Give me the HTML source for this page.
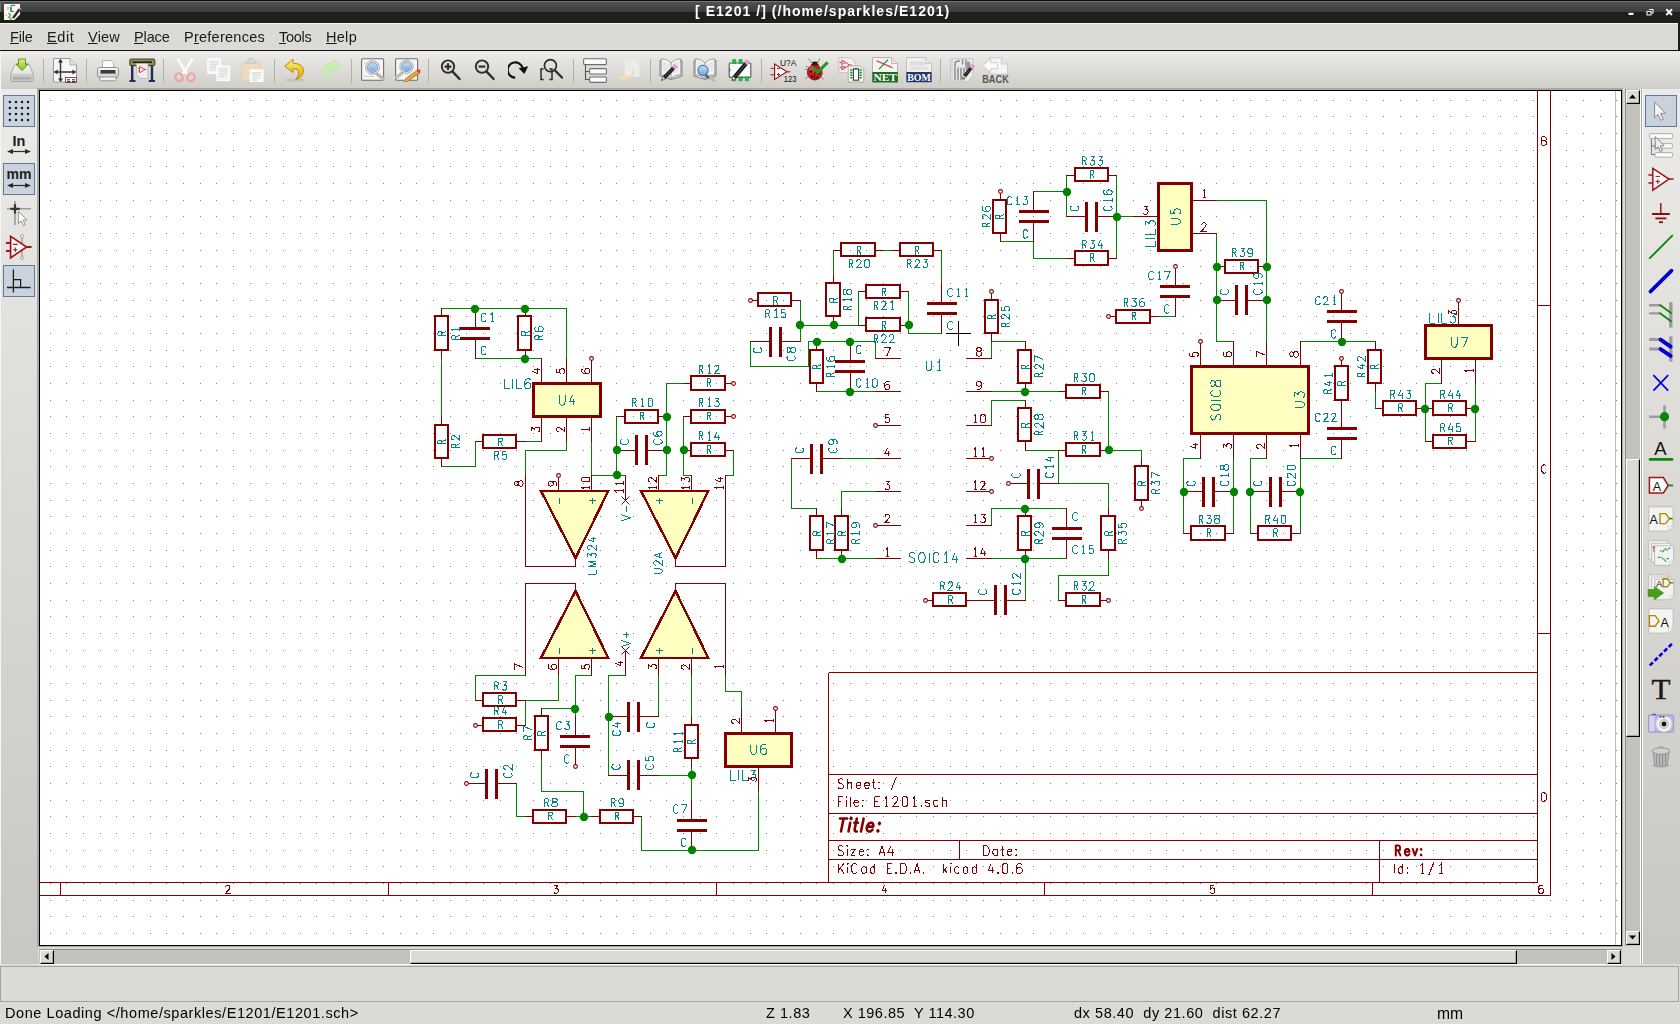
<!DOCTYPE html><html><head><meta charset="utf-8"><title>eeschema</title><style>
*{margin:0;padding:0;box-sizing:border-box}
html,body{width:1680px;height:1024px;overflow:hidden;background:#dcdad5;font-family:"Liberation Sans",sans-serif}
#root{position:relative;width:1680px;height:1024px;overflow:hidden;background:#dcdad5}
.abs{position:absolute}
#title,.mi,.st{will-change:transform}
#titlebar{left:0;top:0;width:1680px;height:23px;background:linear-gradient(#0c0c0c 0,#0c0c0c 1px,#747474 1px,#747474 2px,#525252 2px,#3b3b3b 12px,#1f1f1f 12px,#1e1e1e 23px)}
#title{left:695px;top:2px;white-space:nowrap;color:#fff;font-weight:bold;font-size:14px;line-height:18px;letter-spacing:1.04px}
#menubar{left:0;top:23px;width:1680px;height:27px;background:#dcdad5;border-top:1px solid #f4f3f1}
.mi{position:absolute;top:29px;font-size:14.5px;line-height:17px;color:#1a1a1a}
.mi u{text-decoration:underline;text-underline-offset:1px}
#tbline{left:0;top:50px;width:1680px;height:1px;background:#111}
#toolbar{left:0;top:51px;width:1680px;height:38px;background:linear-gradient(#edecea,#dddbd7 55%,#cfcdc8)}
.sep{position:absolute;top:59px;width:1px;height:24px;background:#b2b0ab}
#lefttb{left:0;top:89px;width:38px;height:875px;background:linear-gradient(#ecebe8,#dcdad6 45%,#c9c7c2)}
#righttb{left:1643px;top:89px;width:37px;height:875px;background:linear-gradient(#ecebe8,#dcdad6 45%,#c9c7c2)}
.sel{position:absolute;background:#c9d3dd;border:1px solid #5c7a99}
</style></head><body><div id="root">
<div id="titlebar" class="abs"></div><div id="title" class="abs">[ E1201 /] (/home/sparkles/E1201)</div>
<svg class="abs" style="left:0;top:0" width="24" height="23" viewBox="0 0 24 23"><rect x="0" y="1" width="1" height="11" fill="#6b6b6b"/><path d="M4 4 H20 V14.5 L14.5 20 H4 Z" fill="#f8f8f8"/><rect x="6.5" y="7" width="2.6" height="2.6" fill="#c8c8c8"/><rect x="10" y="6.6" width="2" height="4.6" fill="#3fae1c"/><path d="M10.6 5.4 H14 M10.4 11.6 H13" stroke="#3a62b8" stroke-width="1"/><circle cx="14.6" cy="5.4" r="0.7" fill="#d33"/><circle cx="13.6" cy="11.6" r="0.7" fill="#d33"/><path d="M8.4 13 L10.6 15 L8.6 17.4 L11.6 18.6 M10.8 19 V20" stroke="#5ab82e" stroke-width="1.4" fill="none"/><circle cx="6.2" cy="15.2" r="0.8" fill="#e88"/><path d="M12 17.4 L18.6 8.4 L20.6 10 L14 18.8 Z" fill="#2a2a2a"/><path d="M18.6 8.4 L19.6 7.4 L21.4 8.8 L20.6 10 Z" fill="#e58ad8"/><path d="M12 17.4 L14 18.8 L11.6 19.2 Z" fill="#e8d870"/></svg>
<svg class="abs" style="left:1620px;top:0" width="60" height="23" viewBox="1620 0 60 23"><rect x="1628.5" y="12.8" width="5" height="2.2" fill="#f4f4f4"/><path d="M1649 9.5 H1653 V13 H1651.5 M1647 11.5 H1651 V15 H1647 Z" fill="none" stroke="#f4f4f4" stroke-width="1.1"/><path d="M1666.3 9.3 L1672 15 M1672 9.3 L1666.3 15" stroke="#f4f4f4" stroke-width="2"/></svg>
<div id="menubar" class="abs"></div><div class="abs" style="left:1678px;top:23px;width:2px;height:28px;background:#1c1c1c"></div>
<div class="mi" style="left:10px;letter-spacing:-0.19px"><u>F</u>ile</div>
<div class="mi" style="left:47px;letter-spacing:0.63px"><u>E</u>dit</div>
<div class="mi" style="left:88px;letter-spacing:0.2px"><u>V</u>iew</div>
<div class="mi" style="left:134px;letter-spacing:-0.14px"><u>P</u>lace</div>
<div class="mi" style="left:184px;letter-spacing:0.25px">P<u>r</u>eferences</div>
<div class="mi" style="left:279px;letter-spacing:-0.29px"><u>T</u>ools</div>
<div class="mi" style="left:326px;letter-spacing:0.29px"><u>H</u>elp</div>
<div id="tbline" class="abs"></div><div id="toolbar" class="abs"></div>
<div class="sep" style="left:43px"></div>
<div class="sep" style="left:86px"></div>
<div class="sep" style="left:163px"></div>
<div class="sep" style="left:274px"></div>
<div class="sep" style="left:351px"></div>
<div class="sep" style="left:428px"></div>
<div class="sep" style="left:573px"></div>
<div class="sep" style="left:650px"></div>
<div class="sep" style="left:761px"></div>
<div class="sep" style="left:940px"></div>
<svg width="0" height="0" style="position:absolute"><defs>
<linearGradient id="gGray" x1="0" y1="0" x2="0" y2="1"><stop offset="0" stop-color="#fafafa"/><stop offset="1" stop-color="#cfcfcf"/></linearGradient>
<linearGradient id="gGrn" x1="0" y1="0" x2="0" y2="1"><stop offset="0" stop-color="#dcee72"/><stop offset="1" stop-color="#86bd2e"/></linearGradient>
<linearGradient id="gYel" x1="0" y1="0" x2="0" y2="1"><stop offset="0" stop-color="#fdf07a"/><stop offset="1" stop-color="#d9a900"/></linearGradient>
<linearGradient id="gLens" x1="0" y1="0" x2="0" y2="1"><stop offset="0" stop-color="#cfe2f7"/><stop offset="1" stop-color="#6f9fd8"/></linearGradient>
<linearGradient id="gBtn" x1="0" y1="0" x2="0" y2="1"><stop offset="0" stop-color="#f3f2f0"/><stop offset="1" stop-color="#d6d4cf"/></linearGradient>
</defs></svg>
<svg class="abs" style="left:10px;top:58px" width="24" height="24" viewBox="0 0 24 24" ><path d="M0.8 16 L4.8 6.6 Q5.4 5.5 6.8 5.5 H17.2 Q18.6 5.5 19.2 6.6 L23.2 16 V22 Q23.2 23.5 21.7 23.5 H2.3 Q0.8 23.5 0.8 22 Z" fill="url(#gGray)" stroke="#9c9c9c" stroke-width="0.9"/><rect x="1.2" y="16" width="21.6" height="7" rx="1" fill="#c9c9c9"/><rect x="3" y="19" width="18" height="2.6" fill="#aeaeae"/><path d="M8.5 1 H15.5 V6.5 H18 L12 12.6 L6 6.5 H8.5 Z" fill="url(#gGrn)" stroke="#5d9c1e" stroke-width="1"/></svg>
<svg class="abs" style="left:53px;top:58px" width="24" height="25" viewBox="0 0 24 25" ><path d="M0.5 0.5 H17 L23.5 7 V24 H0.5 Z" fill="#f7f7f7" stroke="#9a9a9a"/><path d="M17 0.5 V7 H23.5" fill="#e4e4e4" stroke="#9a9a9a" stroke-width="0.8"/><path d="M7.5 2 V23 M1.5 14 H22.5" stroke="#333" stroke-width="1.4" fill="none"/><path d="M7.5 0.8 L5 4.6 H10 Z M7.5 24 L5 20.4 H10 Z M0.8 14 L4.6 11.5 V16.5 Z M23.2 14 L19.4 11.5 V16.5 Z" fill="#333"/><rect x="12.5" y="19.5" width="11" height="5" fill="#fff" stroke="#7a3c3c" stroke-width="0.9"/><path d="M14 21.8 H17 M19 21.8 H22 M14 23.6 H17.5 M19 23.6 H22.5" stroke="#223" stroke-width="1"/></svg>
<svg class="abs" style="left:96px;top:58px" width="24" height="24" viewBox="0 0 24 24" ><path d="M6.5 2.5 H15 L17.8 5.3 V11 H6.5 Z" fill="#fafafa" stroke="#a8a8a8" stroke-width="0.9"/><rect x="1.5" y="9.5" width="21" height="10" rx="2.2" fill="url(#gGray)" stroke="#8f8f8f"/><rect x="4.5" y="12" width="15" height="3.6" fill="#3c3c3c"/><path d="M4 19 H20 V22 Q20 22.8 19 22.8 H5 Q4 22.8 4 22 Z" fill="#f4f4f4" stroke="#8f8f8f" stroke-width="0.9"/><circle cx="20.3" cy="16.8" r="0.7" fill="#7c3"/></svg>
<svg class="abs" style="left:129px;top:58px" width="27" height="25" viewBox="0 0 27 25" ><rect x="0.8" y="1.2" width="25" height="6.4" rx="1.5" fill="#8f8c55" stroke="#4d4b28" stroke-width="1.2"/><rect x="3.5" y="3.4" width="19.5" height="1.6" fill="#26261a"/><path d="M3.2 7.8 V22.5 M23 7.8 V22.5" stroke="#1d2f5c" stroke-width="2.4"/><path d="M0.5 23 H6.5 M19.8 23 H26" stroke="#1d2f5c" stroke-width="1.8"/><path d="M7.5 5.5 H19 V20.5 H11.5 L7.5 16.5 Z" fill="#efefef" stroke="#b0b0b0" stroke-width="0.8"/><path d="M10.5 8.5 L16 11.5 L10.5 14.8 Z M9 10.3 H10.5 M9 13 H10.5 M16 11.5 H17.5" fill="none" stroke="#cf4a4a" stroke-width="1"/></svg>
<svg class="abs" style="left:173px;top:58px" width="24" height="25" viewBox="0 0 24 25" ><path d="M5 1.5 L13.5 15 M19 1.5 L10.5 15" stroke="#fbfbfb" stroke-width="2.6" stroke-linecap="round"/><ellipse cx="6" cy="19.3" rx="3.6" ry="4" fill="none" stroke="#eea4a4" stroke-width="2.2" transform="rotate(-30 6 19.3)"/><ellipse cx="18" cy="19.3" rx="3.6" ry="4" fill="none" stroke="#eea4a4" stroke-width="2.2" transform="rotate(30 18 19.3)"/></svg>
<svg class="abs" style="left:207px;top:58px" width="24" height="24" viewBox="0 0 24 24" ><rect x="0.8" y="0.8" width="12.5" height="14.5" fill="#f3f3f3" stroke="#fdfdfd" stroke-width="1.2"/><path d="M3 4 H11 M3 6.5 H11 M3 9 H11 M3 11.5 H11" stroke="#dedede" stroke-width="1.6"/><rect x="10" y="8" width="12.5" height="14.5" fill="#f3f3f3" stroke="#fdfdfd" stroke-width="1.2"/><path d="M12 11 H20.5 M12 13.5 H20.5 M12 16 H20.5 M12 18.5 H18" stroke="#dedede" stroke-width="1.6"/></svg>
<svg class="abs" style="left:241px;top:58px" width="24" height="24" viewBox="0 0 24 24" ><rect x="0.8" y="3.8" width="18.5" height="19" rx="1.5" fill="#eddcc0" stroke="#e3cfae" stroke-width="1"/><path d="M5.5 5.5 V3.2 H7.5 V1.2 Q7.5 0.5 8.2 0.5 H12 Q12.7 0.5 12.7 1.2 V3.2 H14.7 V5.5 Z" fill="#d6d6d2" stroke="#c4c4c0" stroke-width="0.8"/><rect x="9.2" y="12" width="12.8" height="11.5" fill="#fbfbfb" stroke="#fff" stroke-width="1"/><path d="M11 14.8 H20 M11 17.2 H20 M11 19.6 H20 M11 22 H17" stroke="#dcdcdc" stroke-width="1.4"/></svg>
<svg class="abs" style="left:283px;top:58px" width="24" height="24" viewBox="0 0 24 24" ><ellipse cx="12" cy="22" rx="10" ry="1.6" fill="#b9b7b2" opacity="0.6"/><path d="M10 1.2 L1.8 8.2 L10 14.6 V10.8 Q16.2 10.6 15.6 15.2 Q15.2 18.8 12.8 21.4 Q20.4 19.4 20.4 12.4 Q20.2 5.6 10 5.2 Z" fill="url(#gYel)" stroke="#b58900" stroke-width="1"/></svg>
<svg class="abs" style="left:319px;top:58px" width="24" height="24" viewBox="0 0 24 24" ><path d="M14 1.2 L22.2 8.2 L14 14.6 V10.8 Q7.8 10.6 8.4 15.2 Q8.8 18.8 11.2 21.4 Q3.6 19.4 3.6 12.4 Q3.8 5.6 14 5.2 Z" fill="#c9ecb2" stroke="#bfe6a6" stroke-width="1"/></svg>
<svg class="abs" style="left:361px;top:58px" width="25" height="24" viewBox="0 0 25 24" ><rect x="0.6" y="0.8" width="22" height="21.5" rx="1" fill="#f6f6f6" stroke="#6e6e6e" stroke-width="1.1"/><path d="M3 18.5 H13 M3 5 H5 M3 17 H4" stroke="#c8c8c8" stroke-width="0.8"/><path d="M16 16 L22.5 21" stroke="#bdbdbd" stroke-width="3.4" stroke-linecap="round"/><path d="M16 16 L22.5 21" stroke="#8a8a8a" stroke-width="0.8" stroke-dasharray="1 1"/><circle cx="11.5" cy="9.5" r="5.6" fill="url(#gLens)" stroke="#e8e8e8" stroke-width="2.6"/><circle cx="11.5" cy="9.5" r="6.9" fill="none" stroke="#8d8d8d" stroke-width="0.7"/><circle cx="11.5" cy="9.5" r="5" fill="none" stroke="#4f7fbf" stroke-width="0.8"/></svg>
<svg class="abs" style="left:395px;top:58px" width="26" height="25" viewBox="0 0 26 25" ><rect x="0.6" y="0.8" width="22" height="21.5" rx="1" fill="#f6f6f6" stroke="#6e6e6e" stroke-width="1.1"/><path d="M7 15 L1.5 19.5" stroke="#bdbdbd" stroke-width="3.2" stroke-linecap="round"/><circle cx="11.5" cy="8.8" r="5.4" fill="url(#gLens)" stroke="#e8e8e8" stroke-width="2.6"/><circle cx="11.5" cy="8.8" r="6.7" fill="none" stroke="#8d8d8d" stroke-width="0.7"/><circle cx="11.5" cy="8.8" r="4.8" fill="none" stroke="#4f7fbf" stroke-width="0.8"/><path d="M9.5 23.6 L11.2 20.2 L21.8 12.4 L24.4 15.4 L13.2 23 Z" fill="#e8a33a" stroke="#a66b12" stroke-width="0.7"/><path d="M21.8 12.4 L23.2 11.4 Q24.6 10.8 25.2 12.2 L25.4 14 L24.4 15.4 Z" fill="#e23b3b"/><path d="M9.5 23.6 L11.2 20.2 L13.2 23 Z" fill="#e9d9a8" stroke="#7a6a3a" stroke-width="0.5"/></svg>
<svg class="abs" style="left:440px;top:58px" width="22" height="24" viewBox="0 0 22 24" ><circle cx="8" cy="8.6" r="6.2" fill="none" stroke="#2e2e2e" stroke-width="1.9"/><path d="M12.6 13.6 L19.6 21" stroke="#2e2e2e" stroke-width="2.4" stroke-linecap="round"/><path d="M4.6 8.6 H11.4 M8 5.2 V12" stroke="#2e2e2e" stroke-width="2.2"/></svg>
<svg class="abs" style="left:474px;top:58px" width="22" height="24" viewBox="0 0 22 24" ><circle cx="8" cy="8.6" r="6.2" fill="none" stroke="#2e2e2e" stroke-width="1.9"/><path d="M12.6 13.6 L19.6 21" stroke="#2e2e2e" stroke-width="2.4" stroke-linecap="round"/><path d="M4.6 8.6 H11.4" stroke="#2e2e2e" stroke-width="2.2"/></svg>
<svg class="abs" style="left:508px;top:58px" width="22" height="24" viewBox="0 0 22 24" ><path d="M7.2 19.6 A7.6 7.6 0 1 1 14.6 10" fill="none" stroke="#111" stroke-width="2.2"/><path d="M10.6 10.2 L20.2 8.2 L16.4 16 Z" fill="#111"/></svg>
<svg class="abs" style="left:540px;top:58px" width="24" height="24" viewBox="0 0 24 24" ><circle cx="10.4" cy="7.6" r="6" fill="none" stroke="#2a2a2a" stroke-width="1.7"/><path d="M15 12.4 L22 19.6" stroke="#2a2a2a" stroke-width="2.2" stroke-linecap="round"/><path d="M3.6 11 H1 V21.6 H3.6 M9.4 11 H12 V21.6 H9.4" fill="none" stroke="#2a2a2a" stroke-width="1.5"/></svg>
<svg class="abs" style="left:583px;top:58px" width="24" height="25" viewBox="0 0 24 25" ><path d="M2.5 7 V21.5 H6.5 M2.5 13.5 H6.5" fill="none" stroke="#555" stroke-width="1.1"/><rect x="0.6" y="0.8" width="22.8" height="5.8" rx="1" fill="#fafafa" stroke="#6f6f6f" stroke-width="1.1"/><rect x="6.6" y="10.6" width="16.8" height="5.4" rx="1" fill="#fafafa" stroke="#6f6f6f" stroke-width="1.1"/><rect x="6.6" y="19" width="16.8" height="5.4" rx="1" fill="#fafafa" stroke="#6f6f6f" stroke-width="1.1"/></svg>
<svg class="abs" style="left:618px;top:58px" width="24" height="24" viewBox="0 0 24 24" ><path d="M6.5 0.8 H17 L21.5 5.5 V18.6 H6.5 Z" fill="#ececea" stroke="#e4e4e2" stroke-width="0.8"/><path d="M15.5 11.5 Q15 18 7.4 18.6 V16 L1 19.6 L7.4 23.2 V21 Q17 20.6 15.5 11.5 Z" fill="#f6dcb8" stroke="#f1d3a8" stroke-width="0.6"/></svg>
<svg class="abs" style="left:659px;top:57px" width="27" height="26" viewBox="0 0 27 26" ><path d="M1 3.5 L12 7 L23 3.5 V19 L12 22.5 L1 19 Z" fill="#dcdcdc" stroke="#777" stroke-width="0.9"/><path d="M2.2 1.8 Q7.5 1.2 12 6 Q16.5 1.2 21.8 1.8 V17.8 Q16.5 17.2 12 21.4 Q7.5 17.2 2.2 17.8 Z" fill="#f4f4f4" stroke="#8a8a8a" stroke-width="0.8"/><path d="M12 6 V21.4" stroke="#8a8a8a" stroke-width="0.8"/><path d="M4 5 L10 8 M4 7.5 L10 10.5 M4 10 L10 13 M4 12.5 L10 15.5 M20 5 L14 8 M20 7.5 L14 10.5 M20 10 L14 13 M20 12.5 L14 15.5" stroke="#c4c4c4" stroke-width="0.7"/><path d="M2.5 23.5 L6.6 21.9 L3.9 19.3 Z" fill="#efe3a0" stroke="#333" stroke-width="0.5"/><path d="M6.6 21.9 L15.9 12.3 L13.2 9.7 L3.9 19.3 Z" fill="#1c1c1c"/><path d="M15.9 12.3 L18.4 9.8 L15.6 7.2 L13.2 9.7 Z" fill="#e6a0d8" stroke="#b070a8" stroke-width="0.4"/><path d="M6.0 19.9 L14.2 11.4" stroke="#777" stroke-width="0.6"/><path d="M2.5 23.5 L3.9 23.0 L3.0 22.1 Z" fill="#111"/></svg>
<svg class="abs" style="left:693px;top:57px" width="27" height="26" viewBox="0 0 27 26" ><path d="M1 3.5 L12 7 L23 3.5 V19 L12 22.5 L1 19 Z" fill="#dcdcdc" stroke="#777" stroke-width="0.9"/><path d="M2.2 1.8 Q7.5 1.2 12 6 Q16.5 1.2 21.8 1.8 V17.8 Q16.5 17.2 12 21.4 Q7.5 17.2 2.2 17.8 Z" fill="#f4f4f4" stroke="#8a8a8a" stroke-width="0.8"/><path d="M12 6 V21.4" stroke="#8a8a8a" stroke-width="0.8"/><path d="M4 5 L10 8 M4 7.5 L10 10.5 M4 10 L10 13 M4 12.5 L10 15.5 M20 5 L14 8 M20 7.5 L14 10.5 M20 10 L14 13 M20 12.5 L14 15.5" stroke="#c4c4c4" stroke-width="0.7"/><path d="M13 17.5 L21 23.5" stroke="#b9b9b9" stroke-width="3.2" stroke-linecap="round"/><path d="M12.5 18 L16 21" stroke="#555" stroke-width="2"/><circle cx="10" cy="13.4" r="5" fill="url(#gLens)" stroke="#4679c0" stroke-width="1.2"/></svg>
<svg class="abs" style="left:728px;top:58px" width="25" height="24" viewBox="0 0 25 24" ><rect x="1.2" y="5" width="21.6" height="14.4" rx="1" fill="#fbfbfb" stroke="#555" stroke-width="1.1"/><path d="M1.2 10.4 Q3.4 12.2 1.2 14" fill="none" stroke="#555" stroke-width="0.9"/><path d="M4.6 1.6 H7.8 V5.6 H4.6 Z M11 1.6 H14.2 V5.6 H11 Z M4.6 18.8 H7.8 V22.8 H4.6 Z M11 18.8 H14.2 V22.8 H11 Z M17.4 18.8 H20.6 V22.8 H17.4 Z" fill="#18c43a" stroke="#0d8a25" stroke-width="0.5"/><path d="M3.8 22.4 L8.0 20.7 L4.8 18.0 Z" fill="#efe3a0" stroke="#333" stroke-width="0.5"/><path d="M8.0 20.7 L19.5 7.0 L16.3 4.3 L4.8 18.0 Z" fill="#1c1c1c"/><path d="M19.5 7.0 L21.8 4.4 L18.6 1.6 L16.3 4.3 Z" fill="#e6a0d8" stroke="#b070a8" stroke-width="0.4"/><path d="M7.0 18.6 L17.6 6.1" stroke="#777" stroke-width="0.6"/><path d="M3.8 22.4 L5.2 21.9 L4.1 21.0 Z" fill="#111"/></svg>
<svg class="abs" style="left:770px;top:58px" width="27" height="24" viewBox="0 0 27 24" ><path d="M4.6 6 V21.4 L17 13.8 Z" fill="#fdfdfd" stroke="#a01818" stroke-width="1.2"/><path d="M0.6 10.4 H4.6 M0.6 16.8 H4.6 M17 13.8 H20.4 M7 10.6 H10 M7 16.6 H10 M8.5 15.1 V18.1" stroke="#a01818" stroke-width="1"/><text x="10" y="8.2" font-family="Liberation Sans" font-size="8.6" fill="#111" textLength="16.4" lengthAdjust="spacingAndGlyphs">U?A</text><text x="13.8" y="23.6" font-family="Liberation Sans" font-size="8.6" fill="#111" textLength="12.6" lengthAdjust="spacingAndGlyphs">123</text></svg>
<svg class="abs" style="left:804px;top:57px" width="26" height="25" viewBox="0 0 26 25" ><path d="M4.5 1.5 L9 8 M16 1.5 L12 8 M1 12 L6 13.5 M1.5 22 L6 18 M19.5 22.5 L16 18.5 M2 9.5 L6 11" stroke="#777" stroke-width="0.9" fill="none"/><ellipse cx="10.8" cy="7.4" rx="3.8" ry="2.8" fill="#1a1a1a"/><circle cx="7.6" cy="6.4" r="0.9" fill="#e8c84a"/><circle cx="14" cy="6.4" r="0.9" fill="#e8c84a"/><ellipse cx="10.8" cy="15.4" rx="7.4" ry="7.6" fill="#d41818" stroke="#7c0c0c" stroke-width="0.8"/><ellipse cx="8.4" cy="12.6" rx="3.2" ry="3.4" fill="#ee5a4a" opacity="0.7"/><path d="M10.8 8 V23" stroke="#5a0a0a" stroke-width="0.8"/><circle cx="7" cy="14.6" r="1.4" fill="#1a1a1a"/><circle cx="14.6" cy="16.2" r="1.4" fill="#1a1a1a"/><circle cx="8.2" cy="19.6" r="1.3" fill="#1a1a1a"/><circle cx="13.4" cy="20.6" r="1.1" fill="#1a1a1a"/><path d="M9.4 10.4 L13.6 15.2 L23.6 5.4" fill="none" stroke="#1c9a2e" stroke-width="3"/></svg>
<svg class="abs" style="left:838px;top:57px" width="27" height="26" viewBox="0 0 27 26" ><path d="M0.8 0.8 H13 L17 4.4 V15.6 H0.8 Z" fill="#f1f1f1" stroke="#bdbdbd" stroke-width="0.9"/><path d="M4 3 V13 L11.4 8 Z M1.6 5.6 H4 M1.6 10.4 H4 M11.4 8 H14 M5.4 6.4 H7 M5.4 9.8 H7 M6.2 9 V10.6" fill="none" stroke="#cf3a3a" stroke-width="1"/><path d="M10.2 9 H22.4 L25.8 12 V25 H10.2 Z" fill="#f4f4f4" stroke="#a8a8a8" stroke-width="0.9"/><rect x="15.4" y="11.8" width="5.2" height="11.4" fill="#fdfdfd" stroke="#3a3a3a" stroke-width="1.1"/><path d="M17 11.8 Q18 13.4 19 11.8" fill="none" stroke="#3a3a3a" stroke-width="0.8"/><path d="M12.2 13 H14.4 M12.2 15.6 H14.4 M12.2 18.2 H14.4 M12.2 20.8 H14.4 M21.6 13 H23.8 M21.6 15.6 H23.8 M21.6 18.2 H23.8 M21.6 20.8 H23.8" stroke="#0c9a20" stroke-width="1.6"/></svg>
<svg class="abs" style="left:871.5px;top:57px" width="27" height="26" viewBox="0 0 27 26" ><path d="M0.5 0.5 H19.5 L25.5 6.5 V25 H0.5 Z" fill="#f4f4f4" stroke="#b4b4b4"/><path d="M19.5 0.5 V6.5 H25.5" fill="#e4e4e4" stroke="#b4b4b4" stroke-width="0.8"/><path d="M4.5 3.8 L20.5 10.8" stroke="#d23030" stroke-width="1.2"/><path d="M7 12.2 L16 2.6" stroke="#1c8a2c" stroke-width="1.2"/><rect x="0.4" y="15" width="25.4" height="10.4" fill="#1a6b1a"/><text x="1.4" y="24" font-family="Liberation Serif" font-weight="bold" font-size="10.4" fill="#fff" textLength="23.6" lengthAdjust="spacingAndGlyphs">NET</text></svg>
<svg class="abs" style="left:906px;top:57px" width="26" height="26" viewBox="0 0 26 26" ><path d="M0.5 0.5 H19.5 L25.5 6.5 V25 H0.5 Z" fill="#f0f0f0" stroke="#c2c2c2"/><path d="M19.5 0.5 V6.5 H25.5" fill="#e4e4e4" stroke="#c2c2c2" stroke-width="0.8"/><rect x="3.6" y="4.6" width="16" height="3.6" fill="#dddddb"/><rect x="3.6" y="9.4" width="19" height="3.6" fill="#e2e2e0"/><rect x="0.4" y="15" width="25.2" height="10.2" fill="#1f3670"/><text x="1.2" y="23.6" font-family="Liberation Serif" font-weight="bold" font-size="9.8" fill="#fff" textLength="23.6" lengthAdjust="spacingAndGlyphs">BOM</text></svg>
<svg class="abs" style="left:950px;top:58px" width="25" height="25" viewBox="0 0 25 25" ><path d="M0.8 0.8 H23 V18 L17 24 H0.8 Z" fill="#ebebeb" stroke="#bcbcbc" stroke-width="0.9"/><path d="M2.4 2 V23" stroke="#bbb" stroke-width="1" stroke-dasharray="1 1"/><path d="M5 22.6 V6.4 Q5 3 8.6 3 H10 M8 22.6 V8.8 M11 22.6 V9.4 M12.6 1.6 V6.6 M14 22.6 V9.4 M16 1.6 V8" fill="none" stroke="#8b8b8b" stroke-width="1.5"/><rect x="15.6" y="3.6" width="4.6" height="9" fill="#9a9a9a"/><path d="M5 9.6 H15" stroke="#d8d8d8" stroke-width="1"/><path d="M12.4 21.0 L16.2 18.9 L13.5 16.8 Z" fill="#efe3a0" stroke="#333" stroke-width="0.5"/><path d="M16.2 18.9 L22.4 11.0 L19.7 8.9 L13.5 16.8 Z" fill="#1c1c1c"/><path d="M22.4 11.0 L24.5 8.2 L21.9 6.2 L19.7 8.9 Z" fill="#e6a0d8" stroke="#b070a8" stroke-width="0.4"/><path d="M15.5 17.1 L20.7 10.4" stroke="#777" stroke-width="0.6"/><path d="M12.4 21.0 L13.6 20.3 L12.8 19.6 Z" fill="#111"/></svg>
<svg class="abs" style="left:982px;top:57px" width="28" height="27" viewBox="0 0 28 27" ><path d="M7.6 0.8 H19.4 L25.6 7 V17 H7.6 Z" fill="#f4f4f4" stroke="#c4c4c4" stroke-width="0.9"/><path d="M19.4 0.8 V7 H25.6" fill="#e6e6e6" stroke="#c4c4c4" stroke-width="0.8"/><path d="M0.8 8.6 L8.6 2 V5.8 H15.4 V11.6 H8.6 V15.4 Z" fill="#fdfdfd" stroke="#c9c9c9" stroke-width="0.9"/><text x="0.2" y="25.6" font-family="Liberation Sans" font-weight="bold" font-size="10.4" fill="#555" textLength="26.6" lengthAdjust="spacingAndGlyphs">BACK</text></svg>
<div id="lefttb" class="abs"></div><div id="righttb" class="abs"></div><div class="abs" style="left:0;top:51px;width:1px;height:914px;background:#f6f5f3"></div>
<div class="abs" style="left:37px;top:88px;width:1586px;height:859px;background:#a9a7a2"></div>
<div class="abs" style="left:39px;top:90px;width:1583px;height:856px;background:#000"></div>
<svg width="1581" height="854" viewBox="40 91 1581 854" style="position:absolute;left:40px;top:91px" shape-rendering="crispEdges">
<defs><pattern id="gd" x="50" y="100" width="50" height="50" patternUnits="userSpaceOnUse">
<rect x="0" y="0" width="1" height="1" fill="#848484"/>
<rect x="0" y="16" width="1" height="1" fill="#848484"/>
<rect x="0" y="33" width="1" height="1" fill="#848484"/>
<rect x="16" y="0" width="1" height="1" fill="#848484"/>
<rect x="16" y="16" width="1" height="1" fill="#848484"/>
<rect x="16" y="33" width="1" height="1" fill="#848484"/>
<rect x="33" y="0" width="1" height="1" fill="#848484"/>
<rect x="33" y="16" width="1" height="1" fill="#848484"/>
<rect x="33" y="33" width="1" height="1" fill="#848484"/>
</pattern></defs>
<rect x="40" y="91" width="1581" height="854" fill="#fff"/>
<rect x="40" y="91" width="1581" height="854" fill="url(#gd)"/>
<rect x="1615" y="91" width="1" height="854" fill="#c0c0c0"/>
<path d="M40.0 882.5 L1537.5 882.5 M40.0 895.5 L1550.5 895.5 M1537.5 91.0 L1537.5 882.5 M1550.5 91.0 L1550.5 895.5 M60.5 882.5 L60.5 895.5 M388.5 882.5 L388.5 895.5 M716.5 882.5 L716.5 895.5 M1044.5 882.5 L1044.5 895.5 M1372.5 882.5 L1372.5 895.5 M1537.5 305.5 L1550.5 305.5 M1537.5 633.5 L1550.5 633.5 M828.5 672.5 L1537.5 672.5 M828.5 672.5 L828.5 882.5 M828.5 774.5 L1537.5 774.5 M828.5 813.5 L1537.5 813.5 M828.5 840.5 L1537.5 840.5 M828.5 859.5 L1537.5 859.5 M959.5 840.5 L959.5 859.5 M1379.5 840.5 L1379.5 882.5" stroke="#840000" stroke-width="1" fill="none"/>
<path d="M225.8 887.2 L225.8 886.8 L226.1 886.0 L226.4 885.6 L227.0 885.2 L228.6 885.2 L229.3 885.6 L229.6 886.0 L229.9 886.8 L229.9 887.5 L229.6 888.3 L229.0 889.5 L225.4 893.4 L230.6 893.4 M554.4 885.2 L557.9 885.2 L556.0 888.3 L557.0 888.3 L557.6 888.7 L557.9 889.1 L558.2 890.3 L558.2 891.1 L557.9 892.2 L557.3 893.0 L556.3 893.4 L555.4 893.4 L554.4 893.0 L554.1 892.6 L553.8 891.8 M884.5 885.2 L882.3 890.7 L887.1 890.7 M885.8 887.9 L885.8 893.4 M1214.1 885.2 L1210.9 885.2 L1210.6 888.7 L1210.9 888.3 L1211.9 887.9 L1212.8 887.9 L1213.8 888.3 L1214.4 889.1 L1214.7 890.3 L1214.7 891.1 L1214.4 892.2 L1213.8 893.0 L1212.8 893.4 L1211.9 893.4 L1210.9 893.0 L1210.6 892.6 L1210.3 891.8 M1543.1 886.0 L1542.2 885.2 L1540.6 885.2 L1539.3 886.0 L1538.5 887.5 L1538.5 891.4 L1539.3 893.0 L1540.6 893.4 L1541.8 893.4 L1543.1 892.6 L1543.5 891.4 L1543.5 890.3 L1543.1 889.1 L1541.8 888.3 L1540.6 888.3 L1539.3 889.1 L1538.5 890.3 M1541.6 136.9 L1541.6 145.1 M1541.6 136.9 L1544.8 136.9 L1545.8 137.3 L1546.2 138.1 L1546.2 139.2 L1545.8 140.2 L1544.8 140.8 M1541.6 140.8 L1544.8 140.8 L1545.9 141.2 L1546.6 142.0 L1546.6 143.5 L1546.1 144.5 L1544.8 145.1 L1541.6 145.1 M1546.3 466.5 L1545.6 465.3 L1544.5 464.9 L1543.5 464.9 L1542.4 465.7 L1541.7 466.9 L1541.7 471.1 L1542.4 472.3 L1543.5 473.1 L1544.5 473.1 L1545.6 472.7 L1546.3 471.5 M1541.6 792.9 L1541.6 801.1 M1541.6 792.9 L1544.2 792.9 L1545.4 793.3 L1546.1 794.1 L1546.6 795.2 L1546.7 796.4 L1546.7 797.6 L1546.6 798.8 L1546.1 799.9 L1545.4 800.7 L1544.2 801.1 L1541.6 801.1 M843.4 780.3 L842.6 779.3 L841.5 778.9 L839.9 778.9 L838.8 779.3 L838.0 780.3 L838.0 781.2 L838.4 782.2 L838.8 782.6 L839.5 783.1 L841.8 784.0 L842.6 784.5 L843.0 785.0 L843.4 785.9 L843.4 787.3 L842.6 788.3 L841.5 788.7 L839.9 788.7 L838.8 788.3 L838.0 787.3 M847.7 778.9 L847.7 788.7 M847.7 784.0 L848.9 782.6 L849.6 782.2 L850.8 782.2 L851.6 782.6 L851.9 784.0 L851.9 788.7 M856.2 785.0 L860.8 785.0 L860.8 784.0 L860.4 783.1 L860.0 782.6 L859.3 782.2 L858.1 782.2 L857.3 782.6 L856.6 783.6 L856.2 785.0 L856.2 785.9 L856.6 787.3 L857.3 788.3 L858.1 788.7 L859.3 788.7 L860.0 788.3 L860.8 787.3 M864.6 785.0 L869.2 785.0 L869.2 784.0 L868.8 783.1 L868.5 782.6 L867.7 782.2 L866.5 782.2 L865.8 782.6 L865.0 783.6 L864.6 785.0 L864.6 785.9 L865.0 787.3 L865.8 788.3 L866.5 788.7 L867.7 788.7 L868.5 788.3 L869.2 787.3 M873.6 778.9 L873.6 786.8 L874.0 788.3 L874.7 788.7 L875.5 788.7 M872.4 782.2 L875.1 782.2 M879.1 782.2 L878.7 782.6 L879.1 783.1 L879.5 782.6 L879.1 782.2 M879.1 787.8 L878.7 788.3 L879.1 788.7 L879.5 788.3 L879.1 787.8 M896.3 777.0 L890.9 790.6 M838.3 796.7 L838.3 806.5 M838.3 796.7 L843.3 796.7 M838.3 801.4 L841.4 801.4 M845.9 796.7 L846.3 797.1 L846.7 796.7 L846.3 796.2 L845.9 796.7 M846.3 800.0 L846.3 806.5 M850.1 796.7 L850.1 806.5 M853.8 802.8 L858.5 802.8 L858.5 801.8 L858.1 800.9 L857.7 800.4 L856.9 800.0 L855.8 800.0 L855.0 800.4 L854.2 801.4 L853.8 802.8 L853.8 803.7 L854.2 805.1 L855.0 806.1 L855.8 806.5 L856.9 806.5 L857.7 806.1 L858.5 805.1 M862.7 800.0 L862.3 800.4 L862.7 800.9 L863.1 800.4 L862.7 800.0 M862.7 805.6 L862.3 806.1 L862.7 806.5 L863.1 806.1 L862.7 805.6 M874.9 796.7 L874.9 806.5 M874.9 796.7 L879.9 796.7 M874.9 801.4 L878.0 801.4 M874.9 806.5 L879.9 806.5 M884.6 798.6 L885.4 798.1 L886.5 796.7 L886.5 806.5 M884.6 806.5 L888.4 806.5 M892.8 799.0 L892.8 798.6 L893.2 797.6 L893.6 797.1 L894.4 796.7 L896.3 796.7 L897.0 797.1 L897.4 797.6 L897.8 798.6 L897.8 799.5 L897.4 800.4 L896.7 801.8 L892.4 806.5 L898.6 806.5 M903.7 796.7 L906.0 796.7 L907.2 797.6 L907.6 798.6 L907.6 804.6 L907.2 805.6 L906.0 806.5 L903.7 806.5 L902.6 805.6 L902.2 804.6 L902.2 798.6 L902.6 797.6 L903.7 796.7 M912.7 798.6 L913.5 798.1 L914.6 796.7 L914.6 806.5 M912.7 806.5 L916.6 806.5 M921.3 805.6 L920.9 806.1 L921.3 806.5 L921.7 806.1 L921.3 805.6 M929.7 801.4 L929.3 800.4 L928.2 800.0 L927.0 800.0 L925.9 800.4 L925.5 801.4 L925.9 802.3 L926.6 802.8 L928.6 803.2 L929.3 803.7 L929.7 804.6 L929.7 805.1 L929.3 806.1 L928.2 806.5 L927.0 806.5 L925.9 806.1 L925.5 805.1 M938.1 801.4 L937.3 800.4 L936.6 800.0 L935.4 800.0 L934.7 800.4 L933.9 801.4 L933.5 802.8 L933.5 803.7 L933.9 805.1 L934.7 806.1 L935.4 806.5 L936.6 806.5 L937.3 806.1 L938.1 805.1 M942.4 796.7 L942.4 806.5 M942.4 801.8 L943.5 800.4 L944.3 800.0 L945.4 800.0 L946.2 800.4 L946.6 801.8 L946.6 806.5 M843.4 847.2 L842.6 846.2 L841.5 845.8 L839.9 845.8 L838.8 846.2 L838.0 847.2 L838.0 848.1 L838.4 849.1 L838.8 849.5 L839.5 850.0 L841.8 850.9 L842.6 851.4 L843.0 851.9 L843.4 852.8 L843.4 854.2 L842.6 855.2 L841.5 855.6 L839.9 855.6 L838.8 855.2 L838.0 854.2 M846.9 845.8 L847.2 846.2 L847.6 845.8 L847.2 845.3 L846.9 845.8 M847.2 849.1 L847.2 855.6 M855.2 849.1 L851.0 855.6 M851.0 849.1 L855.2 849.1 M851.0 855.6 L855.2 855.6 M859.0 851.9 L863.6 851.9 L863.6 850.9 L863.2 850.0 L862.8 849.5 L862.1 849.1 L860.9 849.1 L860.2 849.5 L859.4 850.5 L859.0 851.9 L859.0 852.8 L859.4 854.2 L860.2 855.2 L860.9 855.6 L862.1 855.6 L862.8 855.2 L863.6 854.2 M867.9 849.1 L867.5 849.5 L867.9 850.0 L868.2 849.5 L867.9 849.1 M867.9 854.7 L867.5 855.2 L867.9 855.6 L868.2 855.2 L867.9 854.7 M881.9 845.8 L878.8 855.6 M881.9 845.8 L885.0 855.6 M880.0 852.3 L883.8 852.3 M890.8 845.8 L888.1 852.3 L893.9 852.3 M892.4 849.1 L892.4 855.6 M983.0 845.8 L983.0 855.6 M983.0 845.8 L986.1 845.8 L987.6 846.2 L988.4 847.2 L989.0 848.6 L989.2 850.0 L989.2 851.4 L989.0 852.8 L988.4 854.2 L987.6 855.2 L986.1 855.6 L983.0 855.6 M997.4 849.1 L997.4 855.6 M997.4 850.5 L996.6 849.5 L995.9 849.1 L994.7 849.1 L993.9 849.5 L993.2 850.5 L992.8 851.9 L992.8 852.8 L993.2 854.2 L993.9 855.2 L994.7 855.6 L995.9 855.6 L996.6 855.2 L997.4 854.2 M1002.2 845.8 L1002.2 853.7 L1002.6 855.2 L1003.3 855.6 L1004.1 855.6 M1001.0 849.1 L1003.7 849.1 M1007.3 851.9 L1011.9 851.9 L1011.9 850.9 L1011.5 850.0 L1011.1 849.5 L1010.4 849.1 L1009.2 849.1 L1008.4 849.5 L1007.7 850.5 L1007.3 851.9 L1007.3 852.8 L1007.7 854.2 L1008.4 855.2 L1009.2 855.6 L1010.4 855.6 L1011.1 855.2 L1011.9 854.2 M1016.1 849.1 L1015.8 849.5 L1016.1 850.0 L1016.5 849.5 L1016.1 849.1 M1016.1 854.7 L1015.8 855.2 L1016.1 855.6 L1016.5 855.2 L1016.1 854.7 M838.4 863.6 L838.4 873.4 M843.8 863.6 L838.4 870.1 M840.3 867.8 L843.8 873.4 M847.3 863.6 L847.7 864.0 L848.1 863.6 L847.7 863.1 L847.3 863.6 M847.7 866.9 L847.7 873.4 M857.3 865.5 L856.4 864.0 L855.2 863.6 L853.9 863.6 L852.6 864.5 L851.7 865.9 L851.7 871.1 L852.6 872.5 L853.9 873.4 L855.2 873.4 L856.4 873.0 L857.3 871.5 M866.0 866.9 L866.0 873.4 M866.0 868.3 L865.2 867.3 L864.5 866.9 L863.3 866.9 L862.5 867.3 L861.8 868.3 L861.4 869.7 L861.4 870.6 L861.8 872.0 L862.5 873.0 L863.3 873.4 L864.5 873.4 L865.2 873.0 L866.0 872.0 M874.9 863.6 L874.9 873.4 M874.9 868.3 L874.1 867.3 L873.4 866.9 L872.2 866.9 L871.4 867.3 L870.7 868.3 L870.3 869.7 L870.3 870.6 L870.7 872.0 L871.4 873.0 L872.2 873.4 L873.4 873.4 L874.1 873.0 L874.9 872.0 M887.1 863.6 L887.1 873.4 M887.1 863.6 L892.1 863.6 M887.1 868.3 L890.1 868.3 M887.1 873.4 L892.1 873.4 M896.0 872.5 L895.6 873.0 L896.0 873.4 L896.4 873.0 L896.0 872.5 M900.4 863.6 L900.4 873.4 M900.4 863.6 L903.4 863.6 L905.0 864.0 L905.7 865.0 L906.3 866.4 L906.5 867.8 L906.5 869.2 L906.3 870.6 L905.7 872.0 L905.0 873.0 L903.4 873.4 L900.4 873.4 M910.5 872.5 L910.1 873.0 L910.5 873.4 L910.9 873.0 L910.5 872.5 M917.1 863.6 L914.0 873.4 M917.1 863.6 L920.1 873.4 M915.1 870.1 L919.0 870.1 M923.6 872.5 L923.2 873.0 L923.6 873.4 L924.0 873.0 L923.6 872.5 M943.2 863.6 L943.2 873.4 M947.1 866.9 L943.2 871.5 M944.8 869.7 L947.4 873.4 M950.4 863.6 L950.8 864.0 L951.2 863.6 L950.8 863.1 L950.4 863.6 M950.8 866.9 L950.8 873.4 M959.2 868.3 L958.4 867.3 L957.7 866.9 L956.5 866.9 L955.7 867.3 L955.0 868.3 L954.6 869.7 L954.6 870.6 L955.0 872.0 L955.7 873.0 L956.5 873.4 L957.7 873.4 L958.4 873.0 L959.2 872.0 M967.7 866.9 L967.7 873.4 M967.7 868.3 L966.9 867.3 L966.1 866.9 L965.0 866.9 L964.2 867.3 L963.4 868.3 L963.1 869.7 L963.1 870.6 L963.4 872.0 L964.2 873.0 L965.0 873.4 L966.1 873.4 L966.9 873.0 L967.7 872.0 M976.6 863.6 L976.6 873.4 M976.6 868.3 L975.8 867.3 L975.0 866.9 L973.9 866.9 L973.1 867.3 L972.3 868.3 L972.0 869.7 L972.0 870.6 L972.3 872.0 L973.1 873.0 L973.9 873.4 L975.0 873.4 L975.8 873.0 L976.6 872.0 M991.1 863.6 L988.4 870.1 L994.2 870.1 M992.6 866.9 L992.6 873.4 M998.1 872.5 L997.7 873.0 L998.1 873.4 L998.5 873.0 L998.1 872.5 M1004.0 863.6 L1006.3 863.6 L1007.5 864.5 L1007.8 865.5 L1007.8 871.5 L1007.5 872.5 L1006.3 873.4 L1004.0 873.4 L1002.8 872.5 L1002.5 871.5 L1002.5 865.5 L1002.8 864.5 L1004.0 863.6 M1012.2 872.5 L1011.8 873.0 L1012.2 873.4 L1012.6 873.0 L1012.2 872.5 M1021.7 864.5 L1020.7 863.6 L1018.7 863.6 L1017.2 864.5 L1016.2 866.4 L1016.2 871.1 L1017.2 873.0 L1018.7 873.4 L1020.2 873.4 L1021.7 872.5 L1022.2 871.1 L1022.2 869.7 L1021.7 868.3 L1020.2 867.3 L1018.7 867.3 L1017.2 868.3 L1016.2 869.7 M1394.4 863.6 L1394.4 873.4 M1402.8 863.6 L1402.8 873.4 M1402.8 868.3 L1402.0 867.3 L1401.3 866.9 L1400.1 866.9 L1399.4 867.3 L1398.6 868.3 L1398.2 869.7 L1398.2 870.6 L1398.6 872.0 L1399.4 873.0 L1400.1 873.4 L1401.3 873.4 L1402.0 873.0 L1402.8 872.0 M1407.5 866.9 L1407.1 867.3 L1407.5 867.8 L1407.9 867.3 L1407.5 866.9 M1407.5 872.5 L1407.1 873.0 L1407.5 873.4 L1407.9 873.0 L1407.5 872.5 M1420.5 865.5 L1421.3 865.0 L1422.4 863.6 L1422.4 873.4 M1420.5 873.4 L1424.3 873.4 M1434.1 861.7 L1428.7 875.3 M1439.2 865.5 L1440.0 865.0 L1441.1 863.6 L1441.1 873.4 M1439.2 873.4 L1443.1 873.4" stroke="#840000" stroke-width="1" fill="none" stroke-linecap="butt" stroke-linejoin="miter"/>
<path d="M843.6 818.5 L841.0 831.5 M840.0 818.5 L847.2 818.5 M850.6 818.5 L851.0 819.1 L851.6 818.5 L851.2 817.8 L850.6 818.5 M850.2 822.8 L848.5 831.5 M856.8 818.5 L854.7 829.1 L854.8 830.9 L855.7 831.5 L856.8 831.5 M854.4 822.8 L858.0 822.8 M863.6 818.5 L861.0 831.5 M867.0 826.6 L873.1 826.6 L873.4 825.3 L873.1 824.1 L872.7 823.4 L871.8 822.8 L870.3 822.8 L869.1 823.4 L867.9 824.7 L867.0 826.6 L866.7 827.8 L866.9 829.7 L867.7 830.9 L868.6 831.5 L870.1 831.5 L871.2 830.9 L872.5 829.7 M879.5 822.8 L878.9 823.4 L879.3 824.1 L879.9 823.4 L879.5 822.8 M878.0 830.3 L877.4 830.9 L877.8 831.5 L878.4 830.9 L878.0 830.3" stroke="#840000" stroke-width="2.6" fill="none" stroke-linecap="round" stroke-linejoin="round" shape-rendering="auto"/>
<path d="M1395.8 845.6 L1395.8 855.4 M1395.8 845.6 L1398.5 845.6 L1399.6 846.0 L1400.0 847.0 L1400.0 848.9 L1399.6 849.8 L1398.5 850.3 L1395.8 850.3 M1398.1 850.3 L1400.4 855.4 M1404.8 851.7 L1409.4 851.7 L1409.4 850.7 L1409.0 849.8 L1408.6 849.3 L1407.8 848.9 L1406.7 848.9 L1405.9 849.3 L1405.1 850.3 L1404.8 851.7 L1404.8 852.6 L1405.1 854.0 L1405.9 855.0 L1406.7 855.4 L1407.8 855.4 L1408.6 855.0 L1409.4 854.0 M1412.7 848.9 L1415.0 855.4 M1417.3 848.9 L1415.0 855.4 M1421.1 848.9 L1420.7 849.3 L1421.1 849.8 L1421.5 849.3 L1421.1 848.9 M1421.1 854.5 L1420.7 855.0 L1421.1 855.4 L1421.5 855.0 L1421.1 854.5" stroke="#840000" stroke-width="2" fill="none" stroke-linecap="round" stroke-linejoin="round" shape-rendering="auto"/>
<path d="M441.5 308.5 L566.5 308.5 L566.5 358.5 M475.5 358.5 L541.5 358.5 M441.5 358.5 L441.5 416.5 M441.5 466.5 L475.5 466.5 L475.5 441.5 M525.5 441.5 L541.5 441.5 M566.5 441.5 L566.5 450.5 L525.5 450.5 L525.5 475.5 M591.5 441.5 L591.5 475.5 L625.5 475.5 M616.5 416.5 L616.5 475.5 M666.5 416.5 L666.5 383.5 L683.5 383.5 M666.5 416.5 L666.5 475.5 L658.5 475.5 M683.5 416.5 L683.5 475.5 L691.5 475.5 M733.5 450.5 L733.5 475.5 L725.5 475.5 M525.5 675.5 L475.5 675.5 L475.5 700.5 M525.5 700.5 L558.5 700.5 L558.5 675.5 M525.5 700.5 L525.5 725.5 M591.5 675.5 L575.5 675.5 L575.5 716.5 M575.5 708.5 L541.5 708.5 M625.5 675.5 L608.5 675.5 L608.5 775.5 M658.5 675.5 L658.5 716.5 M691.5 675.5 L691.5 716.5 M725.5 675.5 L725.5 691.5 L741.5 691.5 L741.5 708.5 M541.5 758.5 L541.5 791.5 L583.5 791.5 L583.5 816.5 M516.5 783.5 L516.5 816.5 L525.5 816.5 M575.5 816.5 L591.5 816.5 M641.5 816.5 L641.5 850.5 L758.5 850.5 L758.5 791.5 M658.5 775.5 L691.5 775.5 M691.5 766.5 L691.5 800.5 M833.5 250.5 L833.5 275.5 M883.5 250.5 L891.5 250.5 M941.5 250.5 L941.5 283.5 M800.5 300.5 L800.5 341.5 M800.5 325.5 L858.5 325.5 M858.5 291.5 L858.5 325.5 M908.5 291.5 L908.5 333.5 L941.5 333.5 M750.5 341.5 L750.5 366.5 L808.5 366.5 L808.5 341.5 L875.5 341.5 L875.5 358.5 M816.5 391.5 L875.5 391.5 M991.5 358.5 L991.5 341.5 L1025.5 341.5 M991.5 391.5 L1058.5 391.5 M991.5 425.5 L991.5 400.5 L1025.5 400.5 M1025.5 450.5 L1058.5 450.5 M1058.5 450.5 L1058.5 483.5 L1108.5 483.5 L1108.5 508.5 M1108.5 391.5 L1108.5 450.5 M1108.5 450.5 L1141.5 450.5 L1141.5 458.5 M841.5 458.5 L875.5 458.5 M791.5 458.5 L791.5 508.5 L816.5 508.5 M841.5 508.5 L841.5 491.5 L875.5 491.5 M816.5 558.5 L875.5 558.5 M991.5 525.5 L991.5 508.5 L1066.5 508.5 M991.5 558.5 L1066.5 558.5 M1025.5 558.5 L1025.5 600.5 M1108.5 558.5 L1108.5 575.5 L1058.5 575.5 L1058.5 600.5 M1000.5 241.5 L1033.5 241.5 M1033.5 241.5 L1033.5 258.5 L1066.5 258.5 M1033.5 191.5 L1066.5 191.5 M1066.5 175.5 L1066.5 216.5 M1116.5 175.5 L1116.5 258.5 M1116.5 216.5 L1133.5 216.5 M1216.5 200.5 L1266.5 200.5 L1266.5 341.5 M1216.5 233.5 L1216.5 341.5 L1233.5 341.5 M1175.5 316.5 L1158.5 316.5 M1200.5 458.5 L1183.5 458.5 L1183.5 533.5 M1233.5 458.5 L1233.5 533.5 M1266.5 458.5 L1250.5 458.5 L1250.5 533.5 M1300.5 458.5 L1300.5 533.5 M1300.5 458.5 L1341.5 458.5 M1300.5 341.5 L1375.5 341.5 M1375.5 391.5 L1375.5 408.5 M1425.5 408.5 L1425.5 441.5 M1475.5 408.5 L1475.5 441.5 M1425.5 408.5 L1425.5 383.5 L1441.5 383.5 M1475.5 408.5 L1475.5 383.5" stroke="#008400" stroke-width="1" fill="none" stroke-linecap="square"/>
<rect x="435.0" y="316.0" width="13.0" height="34.0" stroke="#840000" stroke-width="2" fill="none"/>
<rect x="518.0" y="316.0" width="13.0" height="34.0" stroke="#840000" stroke-width="2" fill="none"/>
<rect x="435.0" y="425.0" width="13.0" height="33.0" stroke="#840000" stroke-width="2" fill="none"/>
<rect x="483.0" y="435.0" width="33.0" height="13.0" stroke="#840000" stroke-width="2" fill="none"/>
<rect x="625.0" y="410.0" width="33.0" height="13.0" stroke="#840000" stroke-width="2" fill="none"/>
<rect x="691.0" y="376.0" width="34.0" height="14.0" stroke="#840000" stroke-width="2" fill="none"/>
<rect x="691.0" y="410.0" width="34.0" height="13.0" stroke="#840000" stroke-width="2" fill="none"/>
<rect x="691.0" y="443.0" width="34.0" height="13.0" stroke="#840000" stroke-width="2" fill="none"/>
<rect x="533.5" y="383.5" width="67.0" height="33.0" stroke="#840000" stroke-width="3" fill="#ffffc2"/>
<polygon points="541.0,491.0 608.3,491.0 575.5,558.0" stroke="#840000" stroke-width="2.4" fill="#ffffc2" stroke-linejoin="miter"/>
<polygon points="641.0,491.0 708.3,491.0 675.5,558.0" stroke="#840000" stroke-width="2.4" fill="#ffffc2" stroke-linejoin="miter"/>
<polygon points="541.0,658.0 608.3,658.0 575.5,591.0" stroke="#840000" stroke-width="2.4" fill="#ffffc2" stroke-linejoin="miter"/>
<polygon points="641.0,658.0 708.3,658.0 675.5,591.0" stroke="#840000" stroke-width="2.4" fill="#ffffc2" stroke-linejoin="miter"/>
<path d="M621.5 496.5 l8 8 M621.5 504.5 l8 -8" stroke="#840000" stroke-width="1" fill="none" shape-rendering="auto"/>
<path d="M621.5 646.5 l8 8 M621.5 654.5 l8 -8" stroke="#840000" stroke-width="1" fill="none" shape-rendering="auto"/>
<rect x="483.0" y="693.0" width="33.0" height="13.0" stroke="#840000" stroke-width="2" fill="none"/>
<rect x="483.0" y="718.0" width="33.0" height="13.0" stroke="#840000" stroke-width="2" fill="none"/>
<rect x="535.0" y="716.0" width="13.0" height="34.0" stroke="#840000" stroke-width="2" fill="none"/>
<rect x="533.0" y="810.0" width="33.0" height="13.0" stroke="#840000" stroke-width="2" fill="none"/>
<rect x="600.0" y="810.0" width="33.0" height="13.0" stroke="#840000" stroke-width="2" fill="none"/>
<rect x="685.0" y="725.0" width="13.0" height="33.0" stroke="#840000" stroke-width="2" fill="none"/>
<rect x="725.5" y="733.5" width="66.0" height="33.0" stroke="#840000" stroke-width="3" fill="#ffffc2"/>
<rect x="841.0" y="243.0" width="34.0" height="13.0" stroke="#840000" stroke-width="2" fill="none"/>
<rect x="900.0" y="243.0" width="33.0" height="13.0" stroke="#840000" stroke-width="2" fill="none"/>
<rect x="826.0" y="283.0" width="14.0" height="33.0" stroke="#840000" stroke-width="2" fill="none"/>
<rect x="758.0" y="293.0" width="33.0" height="13.0" stroke="#840000" stroke-width="2" fill="none"/>
<rect x="866.0" y="285.0" width="34.0" height="13.0" stroke="#840000" stroke-width="2" fill="none"/>
<rect x="866.0" y="318.0" width="34.0" height="13.0" stroke="#840000" stroke-width="2" fill="none"/>
<rect x="810.0" y="350.0" width="13.0" height="33.0" stroke="#840000" stroke-width="2" fill="none"/>
<rect x="985.0" y="300.0" width="13.0" height="33.0" stroke="#840000" stroke-width="2" fill="none"/>
<rect x="1018.0" y="350.0" width="13.0" height="33.0" stroke="#840000" stroke-width="2" fill="none"/>
<rect x="1018.0" y="408.0" width="13.0" height="33.0" stroke="#840000" stroke-width="2" fill="none"/>
<rect x="1066.0" y="385.0" width="34.0" height="13.0" stroke="#840000" stroke-width="2" fill="none"/>
<rect x="1066.0" y="443.0" width="34.0" height="13.0" stroke="#840000" stroke-width="2" fill="none"/>
<rect x="1135.0" y="466.0" width="13.0" height="34.0" stroke="#840000" stroke-width="2" fill="none"/>
<rect x="1101.0" y="516.0" width="14.0" height="34.0" stroke="#840000" stroke-width="2" fill="none"/>
<rect x="810.0" y="516.0" width="13.0" height="34.0" stroke="#840000" stroke-width="2" fill="none"/>
<rect x="835.0" y="516.0" width="13.0" height="34.0" stroke="#840000" stroke-width="2" fill="none"/>
<rect x="1018.0" y="516.0" width="13.0" height="34.0" stroke="#840000" stroke-width="2" fill="none"/>
<rect x="933.0" y="593.0" width="33.0" height="13.0" stroke="#840000" stroke-width="2" fill="none"/>
<rect x="1066.0" y="593.0" width="34.0" height="13.0" stroke="#840000" stroke-width="2" fill="none"/>
<rect x="993.0" y="200.0" width="13.0" height="33.0" stroke="#840000" stroke-width="2" fill="none"/>
<rect x="1075.0" y="168.0" width="33.0" height="13.0" stroke="#840000" stroke-width="2" fill="none"/>
<rect x="1075.0" y="251.0" width="33.0" height="14.0" stroke="#840000" stroke-width="2" fill="none"/>
<rect x="1225.0" y="260.0" width="33.0" height="13.0" stroke="#840000" stroke-width="2" fill="none"/>
<rect x="1116.0" y="310.0" width="34.0" height="13.0" stroke="#840000" stroke-width="2" fill="none"/>
<rect x="1158.5" y="183.5" width="33.0" height="67.0" stroke="#840000" stroke-width="3" fill="#ffffc2"/>
<rect x="1191.5" y="366.5" width="117.0" height="67.0" stroke="#840000" stroke-width="3" fill="#ffffc2"/>
<rect x="1191.0" y="526.0" width="34.0" height="14.0" stroke="#840000" stroke-width="2" fill="none"/>
<rect x="1258.0" y="526.0" width="33.0" height="14.0" stroke="#840000" stroke-width="2" fill="none"/>
<rect x="1335.0" y="366.0" width="13.0" height="34.0" stroke="#840000" stroke-width="2" fill="none"/>
<rect x="1368.0" y="350.0" width="13.0" height="33.0" stroke="#840000" stroke-width="2" fill="none"/>
<rect x="1383.0" y="401.0" width="33.0" height="14.0" stroke="#840000" stroke-width="2" fill="none"/>
<rect x="1433.0" y="401.0" width="33.0" height="14.0" stroke="#840000" stroke-width="2" fill="none"/>
<rect x="1433.0" y="435.0" width="33.0" height="13.0" stroke="#840000" stroke-width="2" fill="none"/>
<rect x="1425.5" y="325.5" width="66.0" height="33.0" stroke="#840000" stroke-width="3" fill="#ffffc2"/>
<rect x="460.0" y="327.0" width="30" height="3" fill="#840000"/>
<rect x="460.0" y="337.0" width="30" height="3" fill="#840000"/>
<rect x="635.0" y="435.0" width="3" height="30" fill="#840000"/>
<rect x="645.0" y="435.0" width="3" height="30" fill="#840000"/>
<rect x="560.0" y="735.0" width="30" height="3" fill="#840000"/>
<rect x="560.0" y="745.0" width="30" height="3" fill="#840000"/>
<rect x="627.0" y="702.0" width="3" height="30" fill="#840000"/>
<rect x="637.0" y="702.0" width="3" height="30" fill="#840000"/>
<rect x="485.0" y="769.0" width="3" height="30" fill="#840000"/>
<rect x="495.0" y="769.0" width="3" height="30" fill="#840000"/>
<rect x="627.0" y="760.0" width="3" height="30" fill="#840000"/>
<rect x="637.0" y="760.0" width="3" height="30" fill="#840000"/>
<rect x="677.0" y="819.0" width="30" height="3" fill="#840000"/>
<rect x="677.0" y="829.0" width="30" height="3" fill="#840000"/>
<rect x="927.0" y="302.0" width="30" height="3" fill="#840000"/>
<rect x="927.0" y="312.0" width="30" height="3" fill="#840000"/>
<rect x="769.0" y="327.0" width="3" height="30" fill="#840000"/>
<rect x="779.0" y="327.0" width="3" height="30" fill="#840000"/>
<rect x="835.0" y="360.0" width="30" height="3" fill="#840000"/>
<rect x="835.0" y="370.0" width="30" height="3" fill="#840000"/>
<rect x="810.0" y="444.0" width="3" height="30" fill="#840000"/>
<rect x="820.0" y="444.0" width="3" height="30" fill="#840000"/>
<rect x="1027.0" y="469.0" width="3" height="30" fill="#840000"/>
<rect x="1037.0" y="469.0" width="3" height="30" fill="#840000"/>
<rect x="1052.0" y="527.0" width="30" height="3" fill="#840000"/>
<rect x="1052.0" y="537.0" width="30" height="3" fill="#840000"/>
<rect x="994.0" y="585.0" width="3" height="30" fill="#840000"/>
<rect x="1004.0" y="585.0" width="3" height="30" fill="#840000"/>
<rect x="1019.0" y="210.0" width="30" height="3" fill="#840000"/>
<rect x="1019.0" y="220.0" width="30" height="3" fill="#840000"/>
<rect x="1085.0" y="202.0" width="3" height="30" fill="#840000"/>
<rect x="1095.0" y="202.0" width="3" height="30" fill="#840000"/>
<rect x="1235.0" y="285.0" width="3" height="30" fill="#840000"/>
<rect x="1245.0" y="285.0" width="3" height="30" fill="#840000"/>
<rect x="1160.0" y="285.0" width="30" height="3" fill="#840000"/>
<rect x="1160.0" y="295.0" width="30" height="3" fill="#840000"/>
<rect x="1202.0" y="477.0" width="3" height="30" fill="#840000"/>
<rect x="1212.0" y="477.0" width="3" height="30" fill="#840000"/>
<rect x="1269.0" y="477.0" width="3" height="30" fill="#840000"/>
<rect x="1279.0" y="477.0" width="3" height="30" fill="#840000"/>
<rect x="1327.0" y="427.0" width="30" height="3" fill="#840000"/>
<rect x="1327.0" y="437.0" width="30" height="3" fill="#840000"/>
<rect x="1327.0" y="310.0" width="30" height="3" fill="#840000"/>
<rect x="1327.0" y="320.0" width="30" height="3" fill="#840000"/>
<path d="M441.5 308.5 L441.5 316.5 M441.5 350.5 L441.5 358.5 M525.5 308.5 L525.5 316.5 M525.5 350.5 L525.5 358.5 M441.5 416.5 L441.5 425.5 M441.5 458.5 L441.5 466.5 M475.5 441.5 L483.5 441.5 M516.5 441.5 L525.5 441.5 M616.5 416.5 L625.5 416.5 M658.5 416.5 L666.5 416.5 M683.5 383.5 L691.5 383.5 M725.5 383.5 L733.5 383.5 M683.5 416.5 L691.5 416.5 M725.5 416.5 L733.5 416.5 M683.5 450.5 L691.5 450.5 M725.5 450.5 L733.5 450.5 M475.5 308.5 L475.5 327.5 M475.5 339.5 L475.5 358.5 M616.5 450.5 L636.5 450.5 M647.5 450.5 L666.5 450.5 M541.5 358.5 L541.5 383.5 M566.5 358.5 L566.5 383.5 M591.5 358.5 L591.5 383.5 M541.5 441.5 L541.5 416.5 M566.5 441.5 L566.5 416.5 M591.5 441.5 L591.5 416.5 M525.5 475.5 L525.5 566.5 L575.5 566.5 L575.5 558.5 M558.5 475.5 L558.5 491.5 M591.5 475.5 L591.5 491.5 M725.5 475.5 L725.5 566.5 L675.5 566.5 L675.5 558.5 M658.5 475.5 L658.5 491.5 M691.5 475.5 L691.5 491.5 M575.5 591.5 L575.5 583.5 L525.5 583.5 L525.5 675.5 M558.5 675.5 L558.5 658.5 M591.5 675.5 L591.5 658.5 M675.5 591.5 L675.5 583.5 L725.5 583.5 L725.5 675.5 M658.5 675.5 L658.5 658.5 M691.5 675.5 L691.5 658.5 M625.5 475.5 L625.5 500.5 M625.5 650.5 L625.5 675.5 M475.5 700.5 L483.5 700.5 M516.5 700.5 L525.5 700.5 M475.5 725.5 L483.5 725.5 M516.5 725.5 L525.5 725.5 M541.5 708.5 L541.5 716.5 M541.5 750.5 L541.5 758.5 M525.5 816.5 L533.5 816.5 M566.5 816.5 L575.5 816.5 M591.5 816.5 L600.5 816.5 M633.5 816.5 L641.5 816.5 M691.5 716.5 L691.5 725.5 M691.5 758.5 L691.5 766.5 M575.5 716.5 L575.5 736.5 M575.5 747.5 L575.5 766.5 M608.5 716.5 L627.5 716.5 M639.5 716.5 L658.5 716.5 M466.5 783.5 L486.5 783.5 M497.5 783.5 L516.5 783.5 M608.5 775.5 L627.5 775.5 M639.5 775.5 L658.5 775.5 M691.5 800.5 L691.5 819.5 M691.5 831.5 L691.5 850.5 M741.5 708.5 L741.5 733.5 M775.5 708.5 L775.5 733.5 M758.5 791.5 L758.5 766.5 M833.5 250.5 L841.5 250.5 M875.5 250.5 L883.5 250.5 M891.5 250.5 L900.5 250.5 M933.5 250.5 L941.5 250.5 M833.5 275.5 L833.5 283.5 M833.5 316.5 L833.5 325.5 M750.5 300.5 L758.5 300.5 M791.5 300.5 L800.5 300.5 M858.5 291.5 L866.5 291.5 M900.5 291.5 L908.5 291.5 M858.5 325.5 L866.5 325.5 M900.5 325.5 L908.5 325.5 M816.5 341.5 L816.5 350.5 M816.5 383.5 L816.5 391.5 M991.5 291.5 L991.5 300.5 M991.5 333.5 L991.5 341.5 M1025.5 341.5 L1025.5 350.5 M1025.5 383.5 L1025.5 391.5 M1025.5 400.5 L1025.5 408.5 M1025.5 441.5 L1025.5 450.5 M1058.5 391.5 L1066.5 391.5 M1100.5 391.5 L1108.5 391.5 M1058.5 450.5 L1066.5 450.5 M1100.5 450.5 L1108.5 450.5 M1141.5 458.5 L1141.5 466.5 M1141.5 500.5 L1141.5 508.5 M1108.5 508.5 L1108.5 516.5 M1108.5 550.5 L1108.5 558.5 M816.5 508.5 L816.5 516.5 M816.5 550.5 L816.5 558.5 M841.5 508.5 L841.5 516.5 M841.5 550.5 L841.5 558.5 M1025.5 508.5 L1025.5 516.5 M1025.5 550.5 L1025.5 558.5 M925.5 600.5 L933.5 600.5 M966.5 600.5 L975.5 600.5 M1058.5 600.5 L1066.5 600.5 M1100.5 600.5 L1108.5 600.5 M941.5 283.5 L941.5 302.5 M941.5 314.5 L941.5 333.5 M750.5 341.5 L769.5 341.5 M781.5 341.5 L800.5 341.5 M850.5 341.5 L850.5 361.5 M850.5 372.5 L850.5 391.5 M791.5 458.5 L811.5 458.5 M822.5 458.5 L841.5 458.5 M1008.5 483.5 L1027.5 483.5 M1039.5 483.5 L1058.5 483.5 M1066.5 508.5 L1066.5 527.5 M1066.5 539.5 L1066.5 558.5 M975.5 600.5 L994.5 600.5 M1006.5 600.5 L1025.5 600.5 M875.5 358.5 L900.5 358.5 M875.5 391.5 L900.5 391.5 M875.5 425.5 L900.5 425.5 M875.5 458.5 L900.5 458.5 M875.5 491.5 L900.5 491.5 M875.5 525.5 L900.5 525.5 M875.5 558.5 L900.5 558.5 M966.5 358.5 L991.5 358.5 M966.5 391.5 L991.5 391.5 M966.5 425.5 L991.5 425.5 M966.5 458.5 L991.5 458.5 M966.5 491.5 L991.5 491.5 M966.5 525.5 L991.5 525.5 M966.5 558.5 L991.5 558.5 M1000.5 191.5 L1000.5 200.5 M1000.5 233.5 L1000.5 241.5 M1066.5 175.5 L1075.5 175.5 M1108.5 175.5 L1116.5 175.5 M1066.5 258.5 L1075.5 258.5 M1108.5 258.5 L1116.5 258.5 M1216.5 266.5 L1225.5 266.5 M1258.5 266.5 L1266.5 266.5 M1108.5 316.5 L1116.5 316.5 M1150.5 316.5 L1158.5 316.5 M1033.5 191.5 L1033.5 211.5 M1033.5 222.5 L1033.5 241.5 M1066.5 216.5 L1086.5 216.5 M1097.5 216.5 L1116.5 216.5 M1216.5 300.5 L1236.5 300.5 M1247.5 300.5 L1266.5 300.5 M1175.5 266.5 L1175.5 286.5 M1175.5 297.5 L1175.5 316.5 M1133.5 216.5 L1158.5 216.5 M1191.5 200.5 L1216.5 200.5 M1191.5 233.5 L1216.5 233.5 M1200.5 341.5 L1200.5 366.5 M1233.5 341.5 L1233.5 366.5 M1266.5 341.5 L1266.5 366.5 M1300.5 341.5 L1300.5 366.5 M1200.5 458.5 L1200.5 433.5 M1233.5 458.5 L1233.5 433.5 M1266.5 458.5 L1266.5 433.5 M1300.5 458.5 L1300.5 433.5 M1183.5 533.5 L1191.5 533.5 M1225.5 533.5 L1233.5 533.5 M1250.5 533.5 L1258.5 533.5 M1291.5 533.5 L1300.5 533.5 M1341.5 358.5 L1341.5 366.5 M1341.5 400.5 L1341.5 408.5 M1375.5 341.5 L1375.5 350.5 M1375.5 383.5 L1375.5 391.5 M1375.5 408.5 L1383.5 408.5 M1416.5 408.5 L1425.5 408.5 M1425.5 408.5 L1433.5 408.5 M1466.5 408.5 L1475.5 408.5 M1425.5 441.5 L1433.5 441.5 M1466.5 441.5 L1475.5 441.5 M1183.5 491.5 L1202.5 491.5 M1214.5 491.5 L1233.5 491.5 M1250.5 491.5 L1269.5 491.5 M1281.5 491.5 L1300.5 491.5 M1341.5 408.5 L1341.5 427.5 M1341.5 439.5 L1341.5 458.5 M1341.5 291.5 L1341.5 311.5 M1341.5 322.5 L1341.5 341.5 M1458.5 300.5 L1458.5 325.5 M1441.5 383.5 L1441.5 358.5 M1475.5 383.5 L1475.5 358.5" stroke="#840000" stroke-width="1" fill="none" stroke-linecap="square"/>
<circle cx="733.5" cy="383.5" r="1.9" stroke="#840000" stroke-width="1.1" fill="#fff" shape-rendering="auto"/>
<circle cx="733.5" cy="416.5" r="1.9" stroke="#840000" stroke-width="1.1" fill="#fff" shape-rendering="auto"/>
<circle cx="591.5" cy="358.5" r="1.9" stroke="#840000" stroke-width="1.1" fill="#fff" shape-rendering="auto"/>
<circle cx="558.5" cy="475.5" r="1.9" stroke="#840000" stroke-width="1.1" fill="#fff" shape-rendering="auto"/>
<circle cx="475.5" cy="725.5" r="1.9" stroke="#840000" stroke-width="1.1" fill="#fff" shape-rendering="auto"/>
<circle cx="575.5" cy="766.5" r="1.9" stroke="#840000" stroke-width="1.1" fill="#fff" shape-rendering="auto"/>
<circle cx="466.5" cy="783.5" r="1.9" stroke="#840000" stroke-width="1.1" fill="#fff" shape-rendering="auto"/>
<circle cx="775.5" cy="708.5" r="1.9" stroke="#840000" stroke-width="1.1" fill="#fff" shape-rendering="auto"/>
<circle cx="750.5" cy="300.5" r="1.9" stroke="#840000" stroke-width="1.1" fill="#fff" shape-rendering="auto"/>
<circle cx="991.5" cy="291.5" r="1.9" stroke="#840000" stroke-width="1.1" fill="#fff" shape-rendering="auto"/>
<circle cx="1141.5" cy="508.5" r="1.9" stroke="#840000" stroke-width="1.1" fill="#fff" shape-rendering="auto"/>
<circle cx="925.5" cy="600.5" r="1.9" stroke="#840000" stroke-width="1.1" fill="#fff" shape-rendering="auto"/>
<circle cx="1108.5" cy="600.5" r="1.9" stroke="#840000" stroke-width="1.1" fill="#fff" shape-rendering="auto"/>
<circle cx="1008.5" cy="483.5" r="1.9" stroke="#840000" stroke-width="1.1" fill="#fff" shape-rendering="auto"/>
<circle cx="875.5" cy="425.5" r="1.9" stroke="#840000" stroke-width="1.1" fill="#fff" shape-rendering="auto"/>
<circle cx="875.5" cy="525.5" r="1.9" stroke="#840000" stroke-width="1.1" fill="#fff" shape-rendering="auto"/>
<circle cx="991.5" cy="458.5" r="1.9" stroke="#840000" stroke-width="1.1" fill="#fff" shape-rendering="auto"/>
<circle cx="991.5" cy="491.5" r="1.9" stroke="#840000" stroke-width="1.1" fill="#fff" shape-rendering="auto"/>
<circle cx="1000.5" cy="191.5" r="1.9" stroke="#840000" stroke-width="1.1" fill="#fff" shape-rendering="auto"/>
<circle cx="1108.5" cy="316.5" r="1.9" stroke="#840000" stroke-width="1.1" fill="#fff" shape-rendering="auto"/>
<circle cx="1175.5" cy="266.5" r="1.9" stroke="#840000" stroke-width="1.1" fill="#fff" shape-rendering="auto"/>
<circle cx="1200.5" cy="341.5" r="1.9" stroke="#840000" stroke-width="1.1" fill="#fff" shape-rendering="auto"/>
<circle cx="1341.5" cy="358.5" r="1.9" stroke="#840000" stroke-width="1.1" fill="#fff" shape-rendering="auto"/>
<circle cx="1341.5" cy="291.5" r="1.9" stroke="#840000" stroke-width="1.1" fill="#fff" shape-rendering="auto"/>
<circle cx="1458.5" cy="300.5" r="1.9" stroke="#840000" stroke-width="1.1" fill="#fff" shape-rendering="auto"/>
<circle cx="475.0" cy="309.0" r="4.2" fill="#008400" shape-rendering="auto"/>
<circle cx="525.0" cy="309.0" r="4.2" fill="#008400" shape-rendering="auto"/>
<circle cx="525.0" cy="359.0" r="4.2" fill="#008400" shape-rendering="auto"/>
<circle cx="617.0" cy="450.0" r="4.2" fill="#008400" shape-rendering="auto"/>
<circle cx="617.0" cy="475.0" r="4.2" fill="#008400" shape-rendering="auto"/>
<circle cx="667.0" cy="417.0" r="4.2" fill="#008400" shape-rendering="auto"/>
<circle cx="667.0" cy="450.0" r="4.2" fill="#008400" shape-rendering="auto"/>
<circle cx="684.0" cy="450.0" r="4.2" fill="#008400" shape-rendering="auto"/>
<circle cx="575.0" cy="709.0" r="4.2" fill="#008400" shape-rendering="auto"/>
<circle cx="609.0" cy="717.0" r="4.2" fill="#008400" shape-rendering="auto"/>
<circle cx="584.0" cy="817.0" r="4.2" fill="#008400" shape-rendering="auto"/>
<circle cx="692.0" cy="775.0" r="4.2" fill="#008400" shape-rendering="auto"/>
<circle cx="692.0" cy="850.0" r="4.2" fill="#008400" shape-rendering="auto"/>
<circle cx="800.0" cy="325.0" r="4.2" fill="#008400" shape-rendering="auto"/>
<circle cx="834.0" cy="325.0" r="4.2" fill="#008400" shape-rendering="auto"/>
<circle cx="909.0" cy="325.0" r="4.2" fill="#008400" shape-rendering="auto"/>
<circle cx="817.0" cy="342.0" r="4.2" fill="#008400" shape-rendering="auto"/>
<circle cx="850.0" cy="342.0" r="4.2" fill="#008400" shape-rendering="auto"/>
<circle cx="850.0" cy="392.0" r="4.2" fill="#008400" shape-rendering="auto"/>
<circle cx="1025.0" cy="392.0" r="4.2" fill="#008400" shape-rendering="auto"/>
<circle cx="1109.0" cy="450.0" r="4.2" fill="#008400" shape-rendering="auto"/>
<circle cx="842.0" cy="559.0" r="4.2" fill="#008400" shape-rendering="auto"/>
<circle cx="1025.0" cy="509.0" r="4.2" fill="#008400" shape-rendering="auto"/>
<circle cx="1025.0" cy="559.0" r="4.2" fill="#008400" shape-rendering="auto"/>
<circle cx="1067.0" cy="192.0" r="4.2" fill="#008400" shape-rendering="auto"/>
<circle cx="1117.0" cy="217.0" r="4.2" fill="#008400" shape-rendering="auto"/>
<circle cx="1217.0" cy="267.0" r="4.2" fill="#008400" shape-rendering="auto"/>
<circle cx="1217.0" cy="300.0" r="4.2" fill="#008400" shape-rendering="auto"/>
<circle cx="1267.0" cy="267.0" r="4.2" fill="#008400" shape-rendering="auto"/>
<circle cx="1267.0" cy="300.0" r="4.2" fill="#008400" shape-rendering="auto"/>
<circle cx="1184.0" cy="492.0" r="4.2" fill="#008400" shape-rendering="auto"/>
<circle cx="1234.0" cy="492.0" r="4.2" fill="#008400" shape-rendering="auto"/>
<circle cx="1250.0" cy="492.0" r="4.2" fill="#008400" shape-rendering="auto"/>
<circle cx="1300.0" cy="492.0" r="4.2" fill="#008400" shape-rendering="auto"/>
<circle cx="1342.0" cy="342.0" r="4.2" fill="#008400" shape-rendering="auto"/>
<circle cx="1425.0" cy="409.0" r="4.2" fill="#008400" shape-rendering="auto"/>
<circle cx="1475.0" cy="409.0" r="4.2" fill="#008400" shape-rendering="auto"/>
<path d="M559.5 497.5 V503.5 M592.5 497.5 V503.5 M589.0 500.5 H596.0 M659.5 497.5 V503.5 M656.0 500.5 H663.0 M692.5 497.5 V503.5 M559.5 647.5 V653.5 M592.5 647.5 V653.5 M589.0 650.5 H596.0 M659.5 647.5 V653.5 M656.0 650.5 H663.0 M692.5 647.5 V653.5" stroke="#008484" stroke-width="1" fill="none"/>
<path d="M437.9 335.3 L446.2 335.3 M437.9 335.3 L437.9 333.0 L438.3 332.0 L439.1 331.7 L440.6 331.7 L441.4 332.0 L441.8 333.0 L441.8 335.3 M441.8 333.3 L446.2 331.4 M451.5 339.3 L459.8 339.3 M451.5 339.3 L451.5 337.0 L451.9 336.0 L452.7 335.7 L454.2 335.7 L455.0 336.0 L455.4 337.0 L455.4 339.3 M455.4 337.3 L459.8 335.4 M453.1 330.6 L452.7 330.0 L451.5 329.0 L459.8 329.0 M459.8 330.6 L459.8 327.4 M521.2 335.3 L529.5 335.3 M521.2 335.3 L521.2 333.0 L521.6 332.0 L522.4 331.7 L524.0 331.7 L524.8 332.0 L525.2 333.0 L525.2 335.3 M525.2 333.3 L529.5 331.4 M534.8 339.3 L543.1 339.3 M534.8 339.3 L534.8 337.0 L535.2 336.0 L536.0 335.7 L537.6 335.7 L538.4 336.0 L538.8 337.0 L538.8 339.3 M538.8 337.3 L543.1 335.4 M535.6 327.2 L534.8 328.1 L534.8 329.8 L535.6 331.0 L537.2 331.9 L541.2 331.9 L542.7 331.0 L543.1 329.8 L543.1 328.5 L542.3 327.2 L541.2 326.8 L540.0 326.8 L538.8 327.2 L538.0 328.5 L538.0 329.8 L538.8 331.0 L540.0 331.9 M437.9 443.6 L446.2 443.6 M437.9 443.6 L437.9 441.3 L438.3 440.4 L439.1 440.0 L440.6 440.0 L441.4 440.4 L441.8 441.3 L441.8 443.6 M441.8 441.7 L446.2 439.7 M451.5 447.6 L459.8 447.6 M451.5 447.6 L451.5 445.3 L451.9 444.3 L452.7 444.0 L454.2 444.0 L455.0 444.3 L455.4 445.3 L455.4 447.6 M455.4 445.6 L459.8 443.7 M453.5 439.9 L453.1 439.9 L452.3 439.6 L451.9 439.3 L451.5 438.6 L451.5 437.0 L451.9 436.4 L452.3 436.0 L453.1 435.7 L453.9 435.7 L454.6 436.0 L455.8 436.7 L459.8 440.3 L459.8 435.1 M498.7 438.0 L498.7 446.3 M498.7 438.0 L501.0 438.0 L501.9 438.4 L502.3 439.2 L502.3 440.7 L501.9 441.5 L501.0 441.9 L498.7 441.9 M500.6 441.9 L502.6 446.3 M494.7 451.2 L494.7 459.6 M494.7 451.2 L497.0 451.2 L498.0 451.6 L498.3 452.4 L498.3 454.0 L498.0 454.8 L497.0 455.2 L494.7 455.2 M496.7 455.2 L498.6 459.6 M506.3 451.2 L503.0 451.2 L502.7 454.8 L503.0 454.4 L504.0 454.0 L505.0 454.0 L505.9 454.4 L506.6 455.2 L506.9 456.4 L506.9 457.2 L506.6 458.4 L505.9 459.2 L505.0 459.6 L504.0 459.6 L503.0 459.2 L502.7 458.8 L502.4 458.0 M640.3 412.0 L640.3 420.3 M640.3 412.0 L642.6 412.0 L643.6 412.4 L643.9 413.2 L643.9 414.7 L643.6 415.5 L642.6 415.9 L640.3 415.9 M642.3 415.9 L644.3 420.3 M632.4 398.5 L632.4 406.9 M632.4 398.5 L634.7 398.5 L635.7 398.9 L636.0 399.7 L636.0 401.3 L635.7 402.1 L634.7 402.5 L632.4 402.5 M634.4 402.5 L636.3 406.9 M641.0 400.1 L641.7 399.7 L642.7 398.5 L642.7 406.9 M641.0 406.9 L644.3 406.9 M649.3 398.5 L651.2 398.5 L652.2 399.3 L652.5 400.1 L652.5 405.3 L652.2 406.1 L651.2 406.9 L649.3 406.9 L648.3 406.1 L648.0 405.3 L648.0 400.1 L648.3 399.3 L649.3 398.5 M707.0 378.6 L707.0 387.0 M707.0 378.6 L709.3 378.6 L710.3 379.0 L710.6 379.8 L710.6 381.4 L710.3 382.2 L709.3 382.6 L707.0 382.6 M709.0 382.6 L710.9 387.0 M699.1 365.2 L699.1 373.5 M699.1 365.2 L701.4 365.2 L702.3 365.6 L702.7 366.4 L702.7 368.0 L702.3 368.8 L701.4 369.2 L699.1 369.2 M701.0 369.2 L703.0 373.5 M707.7 366.8 L708.4 366.4 L709.3 365.2 L709.3 373.5 M707.7 373.5 L711.0 373.5 M714.7 367.2 L714.7 366.8 L715.0 366.0 L715.3 365.6 L716.0 365.2 L717.6 365.2 L718.2 365.6 L718.6 366.0 L718.9 366.8 L718.9 367.6 L718.6 368.4 L717.9 369.6 L714.3 373.5 L719.5 373.5 M707.0 412.0 L707.0 420.3 M707.0 412.0 L709.3 412.0 L710.3 412.4 L710.6 413.2 L710.6 414.7 L710.3 415.5 L709.3 415.9 L707.0 415.9 M709.0 415.9 L710.9 420.3 M699.1 398.5 L699.1 406.9 M699.1 398.5 L701.4 398.5 L702.3 398.9 L702.7 399.7 L702.7 401.3 L702.3 402.1 L701.4 402.5 L699.1 402.5 M701.0 402.5 L703.0 406.9 M707.7 400.1 L708.4 399.7 L709.3 398.5 L709.3 406.9 M707.7 406.9 L711.0 406.9 M715.3 398.5 L718.9 398.5 L716.9 401.7 L717.9 401.7 L718.6 402.1 L718.9 402.5 L719.2 403.7 L719.2 404.5 L718.9 405.7 L718.2 406.5 L717.3 406.9 L716.3 406.9 L715.3 406.5 L715.0 406.1 L714.7 405.3 M707.0 445.3 L707.0 453.6 M707.0 445.3 L709.3 445.3 L710.3 445.7 L710.6 446.5 L710.6 448.1 L710.3 448.9 L709.3 449.3 L707.0 449.3 M709.0 449.3 L710.9 453.6 M699.1 431.9 L699.1 440.2 M699.1 431.9 L701.4 431.9 L702.3 432.3 L702.7 433.0 L702.7 434.6 L702.3 435.4 L701.4 435.8 L699.1 435.8 M701.0 435.8 L703.0 440.2 M707.7 433.4 L708.4 433.0 L709.3 431.9 L709.3 440.2 M707.7 440.2 L711.0 440.2 M716.9 431.9 L714.7 437.4 L719.5 437.4 M718.2 434.6 L718.2 440.2 M486.0 314.8 L485.3 313.6 L484.2 313.2 L483.1 313.2 L482.0 314.0 L481.3 315.2 L481.3 319.6 L482.0 320.8 L483.1 321.6 L484.2 321.6 L485.3 321.2 L486.0 320.0 M490.5 314.8 L491.1 314.4 L492.1 313.2 L492.1 321.6 M490.5 321.6 L493.7 321.6 M486.0 348.0 L485.3 346.8 L484.2 346.4 L483.1 346.4 L482.0 347.2 L481.3 348.4 L481.3 352.8 L482.0 354.0 L483.1 354.8 L484.2 354.8 L485.3 354.4 L486.0 353.2 M655.2 439.4 L654.0 440.2 L653.6 441.3 L653.6 442.4 L654.4 443.4 L655.6 444.2 L660.0 444.2 L661.2 443.4 L662.0 442.4 L662.0 441.3 L661.6 440.2 L660.4 439.4 M654.4 431.6 L653.6 432.4 L653.6 434.1 L654.4 435.4 L656.0 436.2 L660.0 436.2 L661.6 435.4 L662.0 434.1 L662.0 432.8 L661.2 431.6 L660.0 431.1 L658.8 431.1 L657.6 431.6 L656.8 432.8 L656.8 434.1 L657.6 435.4 L658.8 436.2 M621.8 439.4 L620.6 440.2 L620.2 441.3 L620.2 442.4 L621.0 443.4 L622.2 444.2 L626.6 444.2 L627.8 443.4 L628.6 442.4 L628.6 441.3 L628.2 440.2 L627.0 439.4 M559.5 395.3 L559.5 402.4 L559.9 403.8 L560.7 404.8 L561.9 405.3 L562.7 405.3 L563.8 404.8 L564.6 403.8 L565.0 402.4 L565.0 395.3 M572.3 395.3 L569.5 401.9 L575.4 401.9 M573.8 398.6 L573.8 405.3 M504.6 378.9 L504.6 388.9 M504.6 388.9 L510.1 388.9 M512.9 378.9 L512.9 388.9 M516.5 378.9 L516.5 388.9 M516.5 388.9 L522.0 388.9 M530.2 379.9 L529.2 378.9 L527.1 378.9 L525.6 379.9 L524.6 381.8 L524.6 386.5 L525.6 388.4 L527.1 388.9 L528.7 388.9 L530.2 388.0 L530.7 386.5 L530.7 385.1 L530.2 383.7 L528.7 382.7 L527.1 382.7 L525.6 383.7 L524.6 385.1 M621.4 520.8 L630.6 517.8 M621.4 514.7 L630.6 517.8 M626.0 512.1 L626.0 506.0 M621.4 646.6 L630.6 643.6 M621.4 640.5 L630.6 643.6 M622.9 634.8 L629.1 634.8 M626.0 637.9 L626.0 631.7 M587.8 574.1 L596.2 574.1 M596.2 574.1 L596.2 569.5 M587.8 566.6 L596.2 566.6 M587.8 566.6 L596.2 564.0 M587.8 561.4 L596.2 564.0 M587.8 561.4 L596.2 561.4 M587.8 556.9 L587.8 553.3 L591.0 555.3 L591.0 554.3 L591.4 553.6 L591.8 553.3 L593.0 553.0 L593.8 553.0 L595.0 553.3 L595.8 554.0 L596.2 554.9 L596.2 555.9 L595.8 556.9 L595.4 557.2 L594.6 557.5 M589.8 549.6 L589.4 549.6 L588.6 549.3 L588.2 549.0 L587.8 548.3 L587.8 546.7 L588.2 546.0 L588.6 545.7 L589.4 545.4 L590.2 545.4 L591.0 545.7 L592.2 546.4 L596.2 549.9 L596.2 544.7 M587.8 539.4 L593.4 541.7 L593.4 536.8 M590.6 538.1 L596.2 538.1 M653.9 573.4 L659.9 573.4 L661.1 573.1 L661.9 572.4 L662.3 571.5 L662.3 570.8 L661.9 569.8 L661.1 569.2 L659.9 568.9 L653.9 568.9 M655.9 565.1 L655.5 565.1 L654.7 564.8 L654.3 564.4 L653.9 563.8 L653.9 562.2 L654.3 561.5 L654.7 561.2 L655.5 560.9 L656.3 560.9 L657.1 561.2 L658.3 561.8 L662.3 565.4 L662.3 560.2 M653.9 555.3 L662.3 557.9 M653.9 555.3 L662.3 552.7 M659.5 556.9 L659.5 553.6 M498.7 695.3 L498.7 703.6 M498.7 695.3 L501.0 695.3 L501.9 695.7 L502.3 696.5 L502.3 698.1 L501.9 698.9 L501.0 699.3 L498.7 699.3 M500.6 699.3 L502.6 703.6 M494.7 681.9 L494.7 690.2 M494.7 681.9 L497.0 681.9 L498.0 682.3 L498.3 683.0 L498.3 684.6 L498.0 685.4 L497.0 685.8 L494.7 685.8 M496.7 685.8 L498.6 690.2 M503.0 681.9 L506.6 681.9 L504.6 685.0 L505.6 685.0 L506.3 685.4 L506.6 685.8 L506.9 687.0 L506.9 687.8 L506.6 689.0 L505.9 689.8 L505.0 690.2 L504.0 690.2 L503.0 689.8 L502.7 689.4 L502.4 688.6 M498.7 720.3 L498.7 728.6 M498.7 720.3 L501.0 720.3 L501.9 720.7 L502.3 721.5 L502.3 723.1 L501.9 723.9 L501.0 724.3 L498.7 724.3 M500.6 724.3 L502.6 728.6 M494.7 706.9 L494.7 715.2 M494.7 706.9 L497.0 706.9 L498.0 707.3 L498.3 708.0 L498.3 709.6 L498.0 710.4 L497.0 710.8 L494.7 710.8 M496.7 710.8 L498.6 715.2 M504.6 706.9 L502.4 712.4 L507.2 712.4 M505.9 709.6 L505.9 715.2 M537.4 735.3 L545.7 735.3 M537.4 735.3 L537.4 733.0 L537.8 732.0 L538.6 731.7 L540.1 731.7 L540.9 732.0 L541.3 733.0 L541.3 735.3 M541.3 733.3 L545.7 731.4 M523.8 739.3 L532.1 739.3 M523.8 739.3 L523.8 737.0 L524.2 736.0 L525.0 735.7 L526.5 735.7 L527.3 736.0 L527.7 737.0 L527.7 739.3 M527.7 737.3 L532.1 735.4 M523.8 732.3 L523.8 726.4 L532.1 730.0 M548.7 812.0 L548.7 820.3 M548.7 812.0 L551.0 812.0 L551.9 812.4 L552.3 813.2 L552.3 814.7 L551.9 815.5 L551.0 815.9 L548.7 815.9 M550.6 815.9 L552.6 820.3 M544.7 798.5 L544.7 806.9 M544.7 798.5 L547.0 798.5 L548.0 798.9 L548.3 799.7 L548.3 801.3 L548.0 802.1 L547.0 802.5 L544.7 802.5 M546.7 802.5 L548.6 806.9 M553.8 798.5 L552.6 798.9 L552.2 799.7 L552.2 800.5 L552.6 801.3 L553.4 801.7 L555.0 802.1 L556.3 802.5 L557.1 803.3 L557.5 804.1 L557.5 805.3 L557.1 806.1 L556.7 806.5 L555.4 806.9 L553.8 806.9 L552.6 806.5 L552.2 806.1 L551.8 805.3 L551.8 804.1 L552.2 803.3 L553.0 802.5 L554.2 802.1 L555.9 801.7 L556.7 801.3 L557.1 800.5 L557.1 799.7 L556.7 798.9 L555.4 798.5 L553.8 798.5 M615.3 812.0 L615.3 820.3 M615.3 812.0 L617.6 812.0 L618.6 812.4 L618.9 813.2 L618.9 814.7 L618.6 815.5 L617.6 815.9 L615.3 815.9 M617.3 815.9 L619.3 820.3 M611.4 798.5 L611.4 806.9 M611.4 798.5 L613.7 798.5 L614.6 798.9 L615.0 799.7 L615.0 801.3 L614.6 802.1 L613.7 802.5 L611.4 802.5 M613.3 802.5 L615.3 806.9 M623.8 801.7 L623.0 802.9 L621.7 803.7 L620.5 803.7 L619.2 802.9 L618.8 801.7 L618.8 800.5 L619.2 799.3 L620.5 798.5 L621.7 798.5 L623.0 799.3 L623.8 800.9 L623.8 804.5 L623.0 806.1 L621.7 806.9 L620.0 806.9 L619.2 806.1 M687.4 743.6 L695.7 743.6 M687.4 743.6 L687.4 741.3 L687.8 740.4 L688.6 740.0 L690.1 740.0 L690.9 740.4 L691.3 741.3 L691.3 743.6 M691.3 741.7 L695.7 739.7 M673.8 751.6 L682.1 751.6 M673.8 751.6 L673.8 749.3 L674.2 748.3 L675.0 748.0 L676.5 748.0 L677.3 748.3 L677.7 749.3 L677.7 751.6 M677.7 749.6 L682.1 747.7 M675.4 742.9 L675.0 742.3 L673.8 741.3 L682.1 741.3 M682.1 742.9 L682.1 739.7 M675.4 735.0 L675.0 734.4 L673.8 733.4 L682.1 733.4 M682.1 735.0 L682.1 731.8 M561.4 723.2 L560.7 722.0 L559.6 721.6 L558.5 721.6 L557.4 722.4 L556.7 723.6 L556.7 727.9 L557.4 729.1 L558.5 729.9 L559.6 729.9 L560.7 729.5 L561.4 728.3 M565.6 721.6 L569.2 721.6 L567.2 724.7 L568.2 724.7 L568.8 725.1 L569.2 725.5 L569.5 726.7 L569.5 727.5 L569.2 728.7 L568.5 729.5 L567.5 729.9 L566.6 729.9 L565.6 729.5 L565.3 729.1 L564.9 728.3 M569.4 756.4 L568.6 755.2 L567.6 754.8 L566.5 754.8 L565.4 755.6 L564.6 756.8 L564.6 761.1 L565.4 762.3 L566.5 763.1 L567.6 763.1 L568.6 762.7 L569.4 761.5 M613.9 730.8 L612.7 731.5 L612.3 732.6 L612.3 733.7 L613.1 734.8 L614.3 735.5 L618.7 735.5 L619.9 734.8 L620.7 733.7 L620.7 732.6 L620.3 731.5 L619.1 730.8 M612.3 725.0 L617.9 727.3 L617.9 722.4 M615.1 723.7 L620.7 723.7 M647.8 722.8 L646.6 723.6 L646.2 724.6 L646.2 725.8 L647.0 726.8 L648.2 727.6 L652.6 727.6 L653.8 726.8 L654.6 725.8 L654.6 724.6 L654.2 723.6 L653.0 722.8 M505.2 772.8 L504.0 773.5 L503.6 774.6 L503.6 775.7 L504.4 776.8 L505.6 777.5 L510.0 777.5 L511.2 776.8 L512.0 775.7 L512.0 774.6 L511.6 773.5 L510.4 772.8 M505.6 769.3 L505.2 769.3 L504.4 769.0 L504.0 768.6 L503.6 768.0 L503.6 766.4 L504.0 765.7 L504.4 765.4 L505.2 765.1 L506.0 765.1 L506.8 765.4 L508.0 766.0 L512.0 769.6 L512.0 764.4 M471.8 772.8 L470.6 773.5 L470.2 774.6 L470.2 775.7 L471.0 776.8 L472.2 777.5 L476.6 777.5 L477.8 776.8 L478.6 775.7 L478.6 774.6 L478.2 773.5 L477.0 772.8 M646.9 764.4 L645.7 765.2 L645.3 766.3 L645.3 767.4 L646.1 768.4 L647.3 769.2 L651.6 769.2 L652.8 768.4 L653.6 767.4 L653.6 766.3 L653.2 765.2 L652.0 764.4 M645.3 757.0 L645.3 760.3 L648.9 760.6 L648.5 760.3 L648.1 759.3 L648.1 758.3 L648.5 757.4 L649.3 756.7 L650.4 756.4 L651.2 756.4 L652.4 756.7 L653.2 757.4 L653.6 758.3 L653.6 759.3 L653.2 760.3 L652.8 760.6 L652.0 761.0 M613.5 764.4 L612.3 765.2 L611.9 766.3 L611.9 767.4 L612.7 768.4 L613.9 769.2 L618.2 769.2 L619.4 768.4 L620.2 767.4 L620.2 766.3 L619.8 765.2 L618.6 764.4 M678.1 806.5 L677.4 805.3 L676.3 804.9 L675.2 804.9 L674.1 805.7 L673.4 806.9 L673.4 811.3 L674.1 812.4 L675.2 813.2 L676.3 813.2 L677.4 812.8 L678.1 811.6 M680.9 804.9 L686.8 804.9 L683.2 813.2 M686.0 839.7 L685.3 838.5 L684.2 838.1 L683.1 838.1 L682.0 838.9 L681.3 840.1 L681.3 844.5 L682.0 845.6 L683.1 846.4 L684.2 846.4 L685.3 846.0 L686.0 844.8 M750.9 744.5 L750.9 751.6 L751.3 753.0 L752.1 754.0 L753.3 754.5 L754.0 754.5 L755.2 754.0 L756.0 753.0 L756.4 751.6 L756.4 744.5 M766.2 745.4 L765.2 744.5 L763.1 744.5 L761.6 745.4 L760.6 747.3 L760.6 752.1 L761.6 754.0 L763.1 754.5 L764.7 754.5 L766.2 753.5 L766.7 752.1 L766.7 750.7 L766.2 749.2 L764.7 748.3 L763.1 748.3 L761.6 749.2 L760.6 750.7 M730.1 770.2 L730.1 780.2 M730.1 780.2 L735.6 780.2 M738.4 770.2 L738.4 780.2 M742.0 770.2 L742.0 780.2 M742.0 780.2 L747.5 780.2 M751.2 770.2 L755.5 770.2 L753.1 774.0 L754.3 774.0 L755.1 774.5 L755.5 774.9 L755.9 776.4 L755.9 777.3 L755.5 778.7 L754.7 779.7 L753.5 780.2 L752.4 780.2 L751.2 779.7 L750.8 779.2 L750.4 778.3 M857.0 246.3 L857.0 254.6 M857.0 246.3 L859.3 246.3 L860.3 246.7 L860.6 247.5 L860.6 249.1 L860.3 249.9 L859.3 250.3 L857.0 250.3 M859.0 250.3 L860.9 254.6 M849.1 259.6 L849.1 267.9 M849.1 259.6 L851.4 259.6 L852.3 260.0 L852.7 260.7 L852.7 262.3 L852.3 263.1 L851.4 263.5 L849.1 263.5 M851.0 263.5 L853.0 267.9 M856.7 261.5 L856.7 261.1 L857.1 260.3 L857.4 260.0 L858.0 259.6 L859.7 259.6 L860.3 260.0 L860.6 260.3 L861.0 261.1 L861.0 261.9 L860.6 262.7 L860.0 263.9 L856.4 267.9 L861.6 267.9 M866.0 259.6 L867.9 259.6 L868.9 260.3 L869.2 261.1 L869.2 266.3 L868.9 267.1 L867.9 267.9 L866.0 267.9 L865.0 267.1 L864.7 266.3 L864.7 261.1 L865.0 260.3 L866.0 259.6 M915.3 246.3 L915.3 254.6 M915.3 246.3 L917.6 246.3 L918.6 246.7 L918.9 247.5 L918.9 249.1 L918.6 249.9 L917.6 250.3 L915.3 250.3 M917.3 250.3 L919.3 254.6 M907.4 259.6 L907.4 267.9 M907.4 259.6 L909.7 259.6 L910.7 260.0 L911.0 260.7 L911.0 262.3 L910.7 263.1 L909.7 263.5 L907.4 263.5 M909.4 263.5 L911.3 267.9 M915.1 261.5 L915.1 261.1 L915.4 260.3 L915.7 260.0 L916.4 259.6 L918.0 259.6 L918.6 260.0 L919.0 260.3 L919.3 261.1 L919.3 261.9 L919.0 262.7 L918.3 263.9 L914.7 267.9 L919.9 267.9 M923.6 259.6 L927.2 259.6 L925.3 262.7 L926.2 262.7 L926.9 263.1 L927.2 263.5 L927.5 264.7 L927.5 265.5 L927.2 266.7 L926.6 267.5 L925.6 267.9 L924.6 267.9 L923.6 267.5 L923.3 267.1 L923.0 266.3 M829.5 302.0 L837.9 302.0 M829.5 302.0 L829.5 299.7 L829.9 298.7 L830.7 298.4 L832.3 298.4 L833.1 298.7 L833.5 299.7 L833.5 302.0 M833.5 300.0 L837.9 298.1 M843.1 309.9 L851.5 309.9 M843.1 309.9 L843.1 307.6 L843.5 306.6 L844.3 306.3 L845.9 306.3 L846.7 306.6 L847.1 307.6 L847.1 309.9 M847.1 307.9 L851.5 306.0 M844.7 301.3 L844.3 300.6 L843.1 299.6 L851.5 299.6 M851.5 301.3 L851.5 298.0 M843.1 292.9 L843.5 294.1 L844.3 294.5 L845.1 294.5 L845.9 294.1 L846.3 293.3 L846.7 291.6 L847.1 290.4 L847.9 289.6 L848.7 289.2 L849.9 289.2 L850.7 289.6 L851.1 290.0 L851.5 291.2 L851.5 292.9 L851.1 294.1 L850.7 294.5 L849.9 294.9 L848.7 294.9 L847.9 294.5 L847.1 293.7 L846.7 292.4 L846.3 290.8 L845.9 290.0 L845.1 289.6 L844.3 289.6 L843.5 290.0 L843.1 291.2 L843.1 292.9 M773.7 296.3 L773.7 304.6 M773.7 296.3 L776.0 296.3 L776.9 296.7 L777.3 297.5 L777.3 299.1 L776.9 299.9 L776.0 300.3 L773.7 300.3 M775.6 300.3 L777.6 304.6 M765.7 309.6 L765.7 317.9 M765.7 309.6 L768.0 309.6 L769.0 310.0 L769.3 310.7 L769.3 312.3 L769.0 313.1 L768.0 313.5 L765.7 313.5 M767.7 313.5 L769.7 317.9 M774.4 311.1 L775.0 310.7 L776.0 309.6 L776.0 317.9 M774.4 317.9 L777.6 317.9 M785.2 309.6 L782.0 309.6 L781.7 313.1 L782.0 312.7 L783.0 312.3 L783.9 312.3 L784.9 312.7 L785.6 313.5 L785.9 314.7 L785.9 315.5 L785.6 316.7 L784.9 317.5 L783.9 317.9 L783.0 317.9 L782.0 317.5 L781.7 317.1 L781.3 316.3 M882.0 288.0 L882.0 296.3 M882.0 288.0 L884.3 288.0 L885.3 288.4 L885.6 289.2 L885.6 290.7 L885.3 291.5 L884.3 291.9 L882.0 291.9 M884.0 291.9 L885.9 296.3 M874.1 301.2 L874.1 309.6 M874.1 301.2 L876.4 301.2 L877.3 301.6 L877.7 302.4 L877.7 304.0 L877.3 304.8 L876.4 305.2 L874.1 305.2 M876.0 305.2 L878.0 309.6 M881.7 303.2 L881.7 302.8 L882.1 302.0 L882.4 301.6 L883.0 301.2 L884.7 301.2 L885.3 301.6 L885.6 302.0 L886.0 302.8 L886.0 303.6 L885.6 304.4 L885.0 305.6 L881.4 309.6 L886.6 309.6 M890.6 302.8 L891.3 302.4 L892.3 301.2 L892.3 309.6 M890.6 309.6 L893.9 309.6 M882.0 321.3 L882.0 329.6 M882.0 321.3 L884.3 321.3 L885.3 321.7 L885.6 322.5 L885.6 324.1 L885.3 324.9 L884.3 325.3 L882.0 325.3 M884.0 325.3 L885.9 329.6 M874.1 334.6 L874.1 342.9 M874.1 334.6 L876.4 334.6 L877.3 335.0 L877.7 335.7 L877.7 337.3 L877.3 338.1 L876.4 338.5 L874.1 338.5 M876.0 338.5 L878.0 342.9 M881.7 336.5 L881.7 336.1 L882.1 335.3 L882.4 335.0 L883.0 334.6 L884.7 334.6 L885.3 335.0 L885.6 335.3 L886.0 336.1 L886.0 336.9 L885.6 337.7 L885.0 338.9 L881.4 342.9 L886.6 342.9 M889.7 336.5 L889.7 336.1 L890.0 335.3 L890.3 335.0 L891.0 334.6 L892.6 334.6 L893.2 335.0 L893.6 335.3 L893.9 336.1 L893.9 336.9 L893.6 337.7 L892.9 338.9 L889.3 342.9 L894.5 342.9 M812.9 368.6 L821.2 368.6 M812.9 368.6 L812.9 366.3 L813.3 365.4 L814.1 365.0 L815.6 365.0 L816.4 365.4 L816.8 366.3 L816.8 368.6 M816.8 366.7 L821.2 364.7 M826.5 376.6 L834.8 376.6 M826.5 376.6 L826.5 374.3 L826.9 373.3 L827.7 373.0 L829.2 373.0 L830.0 373.3 L830.4 374.3 L830.4 376.6 M830.4 374.6 L834.8 372.7 M828.1 367.9 L827.7 367.3 L826.5 366.3 L834.8 366.3 M834.8 367.9 L834.8 364.7 M827.3 356.6 L826.5 357.4 L826.5 359.1 L827.3 360.4 L828.9 361.2 L832.8 361.2 L834.4 360.4 L834.8 359.1 L834.8 357.9 L834.0 356.6 L832.8 356.2 L831.6 356.2 L830.4 356.6 L829.6 357.9 L829.6 359.1 L830.4 360.4 L831.6 361.2 M987.9 318.6 L996.2 318.6 M987.9 318.6 L987.9 316.3 L988.3 315.4 L989.1 315.0 L990.6 315.0 L991.4 315.4 L991.8 316.3 L991.8 318.6 M991.8 316.7 L996.2 314.7 M1001.5 326.6 L1009.8 326.6 M1001.5 326.6 L1001.5 324.3 L1001.9 323.3 L1002.7 323.0 L1004.2 323.0 L1005.0 323.3 L1005.4 324.3 L1005.4 326.6 M1005.4 324.6 L1009.8 322.7 M1003.5 318.9 L1003.1 318.9 L1002.3 318.6 L1001.9 318.3 L1001.5 317.6 L1001.5 316.0 L1001.9 315.3 L1002.3 315.0 L1003.1 314.7 L1003.9 314.7 L1004.6 315.0 L1005.8 315.7 L1009.8 319.2 L1009.8 314.0 M1001.5 307.1 L1001.5 310.3 L1005.0 310.7 L1004.6 310.3 L1004.2 309.4 L1004.2 308.4 L1004.6 307.4 L1005.4 306.8 L1006.6 306.4 L1007.4 306.4 L1008.6 306.8 L1009.4 307.4 L1009.8 308.4 L1009.8 309.4 L1009.4 310.3 L1009.0 310.7 L1008.2 311.0 M1021.2 368.6 L1029.5 368.6 M1021.2 368.6 L1021.2 366.3 L1021.6 365.4 L1022.4 365.0 L1024.0 365.0 L1024.8 365.4 L1025.2 366.3 L1025.2 368.6 M1025.2 366.7 L1029.5 364.7 M1034.8 376.6 L1043.1 376.6 M1034.8 376.6 L1034.8 374.3 L1035.2 373.3 L1036.0 373.0 L1037.6 373.0 L1038.4 373.3 L1038.8 374.3 L1038.8 376.6 M1038.8 374.6 L1043.1 372.7 M1036.8 368.9 L1036.4 368.9 L1035.6 368.6 L1035.2 368.3 L1034.8 367.6 L1034.8 366.0 L1035.2 365.3 L1035.6 365.0 L1036.4 364.7 L1037.2 364.7 L1038.0 365.0 L1039.2 365.7 L1043.1 369.2 L1043.1 364.0 M1034.8 361.6 L1034.8 355.8 L1043.1 359.4 M1021.2 427.0 L1029.5 427.0 M1021.2 427.0 L1021.2 424.7 L1021.6 423.7 L1022.4 423.4 L1024.0 423.4 L1024.8 423.7 L1025.2 424.7 L1025.2 427.0 M1025.2 425.0 L1029.5 423.1 M1034.8 434.9 L1043.1 434.9 M1034.8 434.9 L1034.8 432.6 L1035.2 431.6 L1036.0 431.3 L1037.6 431.3 L1038.4 431.6 L1038.8 432.6 L1038.8 434.9 M1038.8 432.9 L1043.1 431.0 M1036.8 427.2 L1036.4 427.2 L1035.6 426.9 L1035.2 426.6 L1034.8 425.9 L1034.8 424.3 L1035.2 423.7 L1035.6 423.3 L1036.4 423.0 L1037.2 423.0 L1038.0 423.3 L1039.2 424.0 L1043.1 427.6 L1043.1 422.4 M1034.8 417.9 L1035.2 419.1 L1036.0 419.5 L1036.8 419.5 L1037.6 419.1 L1038.0 418.3 L1038.4 416.6 L1038.8 415.4 L1039.6 414.6 L1040.4 414.2 L1041.5 414.2 L1042.3 414.6 L1042.7 415.0 L1043.1 416.2 L1043.1 417.9 L1042.7 419.1 L1042.3 419.5 L1041.5 419.9 L1040.4 419.9 L1039.6 419.5 L1038.8 418.7 L1038.4 417.4 L1038.0 415.8 L1037.6 415.0 L1036.8 414.6 L1036.0 414.6 L1035.2 415.0 L1034.8 416.2 L1034.8 417.9 M1082.0 387.0 L1082.0 395.3 M1082.0 387.0 L1084.3 387.0 L1085.3 387.4 L1085.6 388.2 L1085.6 389.7 L1085.3 390.5 L1084.3 390.9 L1082.0 390.9 M1084.0 390.9 L1085.9 395.3 M1074.1 373.5 L1074.1 381.9 M1074.1 373.5 L1076.4 373.5 L1077.3 373.9 L1077.7 374.7 L1077.7 376.3 L1077.3 377.1 L1076.4 377.5 L1074.1 377.5 M1076.0 377.5 L1078.0 381.9 M1082.4 373.5 L1086.0 373.5 L1084.0 376.7 L1085.0 376.7 L1085.6 377.1 L1086.0 377.5 L1086.3 378.7 L1086.3 379.5 L1086.0 380.7 L1085.3 381.5 L1084.3 381.9 L1083.4 381.9 L1082.4 381.5 L1082.1 381.1 L1081.7 380.3 M1091.0 373.5 L1092.9 373.5 L1093.9 374.3 L1094.2 375.1 L1094.2 380.3 L1093.9 381.1 L1092.9 381.9 L1091.0 381.9 L1090.0 381.1 L1089.7 380.3 L1089.7 375.1 L1090.0 374.3 L1091.0 373.5 M1082.0 445.3 L1082.0 453.6 M1082.0 445.3 L1084.3 445.3 L1085.3 445.7 L1085.6 446.5 L1085.6 448.1 L1085.3 448.9 L1084.3 449.3 L1082.0 449.3 M1084.0 449.3 L1085.9 453.6 M1074.1 431.9 L1074.1 440.2 M1074.1 431.9 L1076.4 431.9 L1077.3 432.3 L1077.7 433.0 L1077.7 434.6 L1077.3 435.4 L1076.4 435.8 L1074.1 435.8 M1076.0 435.8 L1078.0 440.2 M1082.4 431.9 L1086.0 431.9 L1084.0 435.0 L1085.0 435.0 L1085.6 435.4 L1086.0 435.8 L1086.3 437.0 L1086.3 437.8 L1086.0 439.0 L1085.3 439.8 L1084.3 440.2 L1083.4 440.2 L1082.4 439.8 L1082.1 439.4 L1081.7 438.6 M1090.6 433.4 L1091.3 433.0 L1092.3 431.9 L1092.3 440.2 M1090.6 440.2 L1093.9 440.2 M1137.9 485.3 L1146.2 485.3 M1137.9 485.3 L1137.9 483.0 L1138.3 482.0 L1139.1 481.7 L1140.6 481.7 L1141.4 482.0 L1141.8 483.0 L1141.8 485.3 M1141.8 483.3 L1146.2 481.4 M1151.5 493.2 L1159.8 493.2 M1151.5 493.2 L1151.5 490.9 L1151.9 490.0 L1152.7 489.6 L1154.2 489.6 L1155.0 490.0 L1155.4 490.9 L1155.4 493.2 M1155.4 491.3 L1159.8 489.3 M1151.5 484.9 L1151.5 481.4 L1154.6 483.3 L1154.6 482.3 L1155.0 481.7 L1155.4 481.4 L1156.6 481.0 L1157.4 481.0 L1158.6 481.4 L1159.4 482.0 L1159.8 483.0 L1159.8 484.0 L1159.4 484.9 L1159.0 485.3 L1158.2 485.6 M1151.5 478.3 L1151.5 472.4 L1159.8 476.0 M1104.5 535.3 L1112.9 535.3 M1104.5 535.3 L1104.5 533.0 L1104.9 532.0 L1105.7 531.7 L1107.3 531.7 L1108.1 532.0 L1108.5 533.0 L1108.5 535.3 M1108.5 533.3 L1112.9 531.4 M1118.1 543.2 L1126.5 543.2 M1118.1 543.2 L1118.1 540.9 L1118.5 540.0 L1119.3 539.6 L1120.9 539.6 L1121.7 540.0 L1122.1 540.9 L1122.1 543.2 M1122.1 541.3 L1126.5 539.3 M1118.1 534.9 L1118.1 531.4 L1121.3 533.3 L1121.3 532.3 L1121.7 531.7 L1122.1 531.4 L1123.3 531.0 L1124.1 531.0 L1125.3 531.4 L1126.1 532.0 L1126.5 533.0 L1126.5 534.0 L1126.1 534.9 L1125.7 535.3 L1124.9 535.6 M1118.1 523.7 L1118.1 527.0 L1121.7 527.3 L1121.3 527.0 L1120.9 526.0 L1120.9 525.0 L1121.3 524.1 L1122.1 523.4 L1123.3 523.1 L1124.1 523.1 L1125.3 523.4 L1126.1 524.1 L1126.5 525.0 L1126.5 526.0 L1126.1 527.0 L1125.7 527.3 L1124.9 527.6 M812.9 535.3 L821.2 535.3 M812.9 535.3 L812.9 533.0 L813.3 532.0 L814.1 531.7 L815.6 531.7 L816.4 532.0 L816.8 533.0 L816.8 535.3 M816.8 533.3 L821.2 531.4 M826.5 543.2 L834.8 543.2 M826.5 543.2 L826.5 540.9 L826.9 540.0 L827.7 539.6 L829.2 539.6 L830.0 540.0 L830.4 540.9 L830.4 543.2 M830.4 541.3 L834.8 539.3 M828.1 534.6 L827.7 534.0 L826.5 533.0 L834.8 533.0 M834.8 534.6 L834.8 531.4 M826.5 528.3 L826.5 522.4 L834.8 526.0 M837.9 535.3 L846.2 535.3 M837.9 535.3 L837.9 533.0 L838.3 532.0 L839.1 531.7 L840.6 531.7 L841.4 532.0 L841.8 533.0 L841.8 535.3 M841.8 533.3 L846.2 531.4 M851.5 543.2 L859.8 543.2 M851.5 543.2 L851.5 540.9 L851.9 540.0 L852.7 539.6 L854.2 539.6 L855.0 540.0 L855.4 540.9 L855.4 543.2 M855.4 541.3 L859.8 539.3 M853.1 534.6 L852.7 534.0 L851.5 533.0 L859.8 533.0 M859.8 534.6 L859.8 531.4 M854.6 522.8 L855.8 523.7 L856.6 524.9 L856.6 526.2 L855.8 527.5 L854.6 527.9 L853.5 527.9 L852.3 527.5 L851.5 526.2 L851.5 524.9 L852.3 523.7 L853.9 522.8 L857.4 522.8 L859.0 523.7 L859.8 524.9 L859.8 526.6 L859.0 527.5 M1021.2 535.3 L1029.5 535.3 M1021.2 535.3 L1021.2 533.0 L1021.6 532.0 L1022.4 531.7 L1024.0 531.7 L1024.8 532.0 L1025.2 533.0 L1025.2 535.3 M1025.2 533.3 L1029.5 531.4 M1034.8 543.2 L1043.1 543.2 M1034.8 543.2 L1034.8 540.9 L1035.2 540.0 L1036.0 539.6 L1037.6 539.6 L1038.4 540.0 L1038.8 540.9 L1038.8 543.2 M1038.8 541.3 L1043.1 539.3 M1036.8 535.6 L1036.4 535.6 L1035.6 535.3 L1035.2 534.9 L1034.8 534.3 L1034.8 532.7 L1035.2 532.0 L1035.6 531.7 L1036.4 531.4 L1037.2 531.4 L1038.0 531.7 L1039.2 532.3 L1043.1 535.9 L1043.1 530.7 M1038.0 522.8 L1039.2 523.7 L1040.0 524.9 L1040.0 526.2 L1039.2 527.5 L1038.0 527.9 L1036.8 527.9 L1035.6 527.5 L1034.8 526.2 L1034.8 524.9 L1035.6 523.7 L1037.2 522.8 L1040.8 522.8 L1042.3 523.7 L1043.1 524.9 L1043.1 526.6 L1042.3 527.5 M948.7 595.3 L948.7 603.6 M948.7 595.3 L951.0 595.3 L951.9 595.7 L952.3 596.5 L952.3 598.1 L951.9 598.9 L951.0 599.3 L948.7 599.3 M950.6 599.3 L952.6 603.6 M940.7 581.9 L940.7 590.2 M940.7 581.9 L943.0 581.9 L944.0 582.3 L944.3 583.0 L944.3 584.6 L944.0 585.4 L943.0 585.8 L940.7 585.8 M942.7 585.8 L944.7 590.2 M948.4 583.8 L948.4 583.4 L948.7 582.6 L949.0 582.3 L949.7 581.9 L951.3 581.9 L952.0 582.3 L952.3 582.6 L952.6 583.4 L952.6 584.2 L952.3 585.0 L951.6 586.2 L948.1 590.2 L953.3 590.2 M958.6 581.9 L956.3 587.4 L961.2 587.4 M959.9 584.6 L959.9 590.2 M1082.0 595.3 L1082.0 603.6 M1082.0 595.3 L1084.3 595.3 L1085.3 595.7 L1085.6 596.5 L1085.6 598.1 L1085.3 598.9 L1084.3 599.3 L1082.0 599.3 M1084.0 599.3 L1085.9 603.6 M1074.1 581.9 L1074.1 590.2 M1074.1 581.9 L1076.4 581.9 L1077.3 582.3 L1077.7 583.0 L1077.7 584.6 L1077.3 585.4 L1076.4 585.8 L1074.1 585.8 M1076.0 585.8 L1078.0 590.2 M1082.4 581.9 L1086.0 581.9 L1084.0 585.0 L1085.0 585.0 L1085.6 585.4 L1086.0 585.8 L1086.3 587.0 L1086.3 587.8 L1086.0 589.0 L1085.3 589.8 L1084.3 590.2 L1083.4 590.2 L1082.4 589.8 L1082.1 589.4 L1081.7 588.6 M1089.7 583.8 L1089.7 583.4 L1090.0 582.6 L1090.3 582.3 L1091.0 581.9 L1092.6 581.9 L1093.2 582.3 L1093.6 582.6 L1093.9 583.4 L1093.9 584.2 L1093.6 585.0 L1092.9 586.2 L1089.3 590.2 L1094.5 590.2 M952.7 289.8 L951.9 288.6 L950.9 288.2 L949.7 288.2 L948.7 289.0 L947.9 290.2 L947.9 294.6 L948.7 295.8 L949.7 296.6 L950.9 296.6 L951.9 296.2 L952.7 295.0 M957.1 289.8 L957.8 289.4 L958.8 288.2 L958.8 296.6 M957.1 296.6 L960.4 296.6 M965.1 289.8 L965.7 289.4 L966.7 288.2 L966.7 296.6 M965.1 296.6 L968.3 296.6 M952.7 323.0 L951.9 321.8 L950.9 321.4 L949.7 321.4 L948.7 322.2 L947.9 323.4 L947.9 327.8 L948.7 329.0 L949.7 329.8 L950.9 329.8 L951.9 329.4 L952.7 328.2 M788.5 355.8 L787.4 356.5 L787.0 357.6 L787.0 358.7 L787.7 359.8 L788.9 360.5 L793.3 360.5 L794.5 359.8 L795.3 358.7 L795.3 357.6 L794.9 356.5 L793.7 355.8 M787.0 350.8 L787.4 352.0 L788.1 352.4 L788.9 352.4 L789.7 352.0 L790.1 351.2 L790.5 349.6 L790.9 348.4 L791.7 347.6 L792.5 347.1 L793.7 347.1 L794.5 347.6 L794.9 348.0 L795.3 349.2 L795.3 350.8 L794.9 352.0 L794.5 352.4 L793.7 352.9 L792.5 352.9 L791.7 352.4 L790.9 351.6 L790.5 350.4 L790.1 348.8 L789.7 348.0 L788.9 347.6 L788.1 347.6 L787.4 348.0 L787.0 349.2 L787.0 350.8 M755.1 347.8 L754.0 348.6 L753.6 349.6 L753.6 350.8 L754.3 351.8 L755.5 352.6 L759.9 352.6 L761.1 351.8 L761.9 350.8 L761.9 349.6 L761.5 348.6 L760.3 347.8 M861.0 347.1 L860.3 345.9 L859.2 345.5 L858.1 345.5 L857.0 346.3 L856.3 347.5 L856.3 351.9 L857.0 353.1 L858.1 353.9 L859.2 353.9 L860.3 353.5 L861.0 352.3 M861.0 380.4 L860.3 379.2 L859.2 378.8 L858.1 378.8 L857.0 379.6 L856.3 380.8 L856.3 385.1 L857.0 386.3 L858.1 387.1 L859.2 387.1 L860.3 386.7 L861.0 385.5 M865.5 380.4 L866.1 380.0 L867.1 378.8 L867.1 387.1 M865.5 387.1 L868.7 387.1 M873.7 378.8 L875.7 378.8 L876.7 379.6 L877.0 380.4 L877.0 385.5 L876.7 386.3 L875.7 387.1 L873.7 387.1 L872.7 386.3 L872.4 385.5 L872.4 380.4 L872.7 379.6 L873.7 378.8 M830.2 447.8 L829.0 448.5 L828.6 449.6 L828.6 450.7 L829.4 451.8 L830.6 452.5 L835.0 452.5 L836.2 451.8 L837.0 450.7 L837.0 449.6 L836.6 448.5 L835.4 447.8 M831.8 439.5 L833.0 440.3 L833.8 441.6 L833.8 442.9 L833.0 444.1 L831.8 444.5 L830.6 444.5 L829.4 444.1 L828.6 442.9 L828.6 441.6 L829.4 440.3 L831.0 439.5 L834.6 439.5 L836.2 440.3 L837.0 441.6 L837.0 443.3 L836.2 444.1 M796.8 447.8 L795.6 448.5 L795.2 449.6 L795.2 450.7 L796.0 451.8 L797.2 452.5 L801.6 452.5 L802.8 451.8 L803.6 450.7 L803.6 449.6 L803.2 448.5 L802.0 447.8 M1046.9 472.8 L1045.7 473.5 L1045.3 474.6 L1045.3 475.7 L1046.1 476.8 L1047.3 477.5 L1051.6 477.5 L1052.8 476.8 L1053.6 475.7 L1053.6 474.6 L1053.2 473.5 L1052.0 472.8 M1046.9 468.3 L1046.5 467.7 L1045.3 466.7 L1053.6 466.7 M1053.6 468.3 L1053.6 465.1 M1045.3 459.1 L1050.8 461.4 L1050.8 456.5 M1048.1 457.8 L1053.6 457.8 M1013.5 472.8 L1012.3 473.5 L1011.9 474.6 L1011.9 475.7 L1012.7 476.8 L1013.9 477.5 L1018.2 477.5 L1019.4 476.8 L1020.2 475.7 L1020.2 474.6 L1019.8 473.5 L1018.6 472.8 M1077.7 513.8 L1076.9 512.6 L1075.9 512.2 L1074.7 512.2 L1073.7 513.0 L1072.9 514.2 L1072.9 518.5 L1073.7 519.7 L1074.7 520.5 L1075.9 520.5 L1076.9 520.1 L1077.7 518.9 M1077.7 547.0 L1076.9 545.8 L1075.9 545.4 L1074.7 545.4 L1073.7 546.2 L1072.9 547.4 L1072.9 551.8 L1073.7 553.0 L1074.7 553.8 L1075.9 553.8 L1076.9 553.4 L1077.7 552.2 M1082.1 547.0 L1082.8 546.6 L1083.8 545.4 L1083.8 553.8 M1082.1 553.8 L1085.4 553.8 M1093.0 545.4 L1089.7 545.4 L1089.4 549.0 L1089.7 548.6 L1090.7 548.2 L1091.7 548.2 L1092.7 548.6 L1093.3 549.4 L1093.6 550.6 L1093.6 551.4 L1093.3 552.6 L1092.7 553.4 L1091.7 553.8 L1090.7 553.8 L1089.7 553.4 L1089.4 553.0 L1089.1 552.2 M1013.5 589.4 L1012.4 590.2 L1012.0 591.3 L1012.0 592.4 L1012.7 593.4 L1013.9 594.2 L1018.3 594.2 L1019.5 593.4 L1020.3 592.4 L1020.3 591.3 L1019.9 590.2 L1018.7 589.4 M1013.5 585.0 L1013.1 584.3 L1012.0 583.3 L1020.3 583.3 M1020.3 585.0 L1020.3 581.7 M1013.9 578.0 L1013.5 578.0 L1012.7 577.7 L1012.4 577.4 L1012.0 576.7 L1012.0 575.1 L1012.4 574.4 L1012.7 574.1 L1013.5 573.8 L1014.3 573.8 L1015.1 574.1 L1016.3 574.8 L1020.3 578.3 L1020.3 573.1 M980.1 589.4 L979.0 590.2 L978.6 591.3 L978.6 592.4 L979.3 593.4 L980.5 594.2 L984.9 594.2 L986.1 593.4 L986.9 592.4 L986.9 591.3 L986.5 590.2 L985.3 589.4 M926.0 360.8 L926.0 368.0 L926.4 369.4 L927.2 370.4 L928.4 370.8 L929.1 370.8 L930.3 370.4 L931.1 369.4 L931.5 368.0 L931.5 360.8 M937.2 362.7 L938.0 362.3 L939.1 360.8 L939.1 370.8 M937.2 370.8 L941.1 370.8 M914.6 554.0 L913.8 553.0 L912.6 552.6 L911.1 552.6 L909.9 553.0 L909.1 554.0 L909.1 554.9 L909.5 555.9 L909.9 556.4 L910.7 556.8 L913.0 557.8 L913.8 558.3 L914.2 558.7 L914.6 559.7 L914.6 561.1 L913.8 562.1 L912.6 562.6 L911.1 562.6 L909.9 562.1 L909.1 561.1 M921.1 552.6 L920.3 553.0 L919.5 554.0 L919.1 554.9 L918.7 556.4 L918.7 558.7 L919.1 560.2 L919.5 561.1 L920.3 562.1 L921.1 562.6 L922.6 562.6 L923.4 562.1 L924.2 561.1 L924.6 560.2 L925.0 558.7 L925.0 556.4 L924.6 554.9 L924.2 554.0 L923.4 553.0 L922.6 552.6 L921.1 552.6 M929.0 552.6 L929.0 562.6 M938.7 554.5 L937.8 553.0 L936.5 552.6 L935.2 552.6 L933.9 553.5 L933.0 554.9 L933.0 560.2 L933.9 561.6 L935.2 562.6 L936.5 562.6 L937.8 562.1 L938.7 560.6 M944.1 554.5 L944.9 554.0 L946.0 552.6 L946.0 562.6 M944.1 562.6 L948.0 562.6 M955.2 552.6 L952.4 559.2 L958.3 559.2 M956.7 555.9 L956.7 562.6 M995.7 218.6 L1004.0 218.6 M995.7 218.6 L995.7 216.3 L996.1 215.4 L996.9 215.0 L998.5 215.0 L999.3 215.4 L999.7 216.3 L999.7 218.6 M999.7 216.7 L1004.0 214.7 M982.1 226.6 L990.4 226.6 M982.1 226.6 L982.1 224.3 L982.5 223.3 L983.3 223.0 L984.9 223.0 L985.7 223.3 L986.1 224.3 L986.1 226.6 M986.1 224.6 L990.4 222.7 M984.1 218.9 L983.7 218.9 L982.9 218.6 L982.5 218.3 L982.1 217.6 L982.1 216.0 L982.5 215.3 L982.9 215.0 L983.7 214.7 L984.5 214.7 L985.3 215.0 L986.5 215.7 L990.4 219.2 L990.4 214.0 M982.9 206.6 L982.1 207.4 L982.1 209.1 L982.9 210.4 L984.5 211.2 L988.5 211.2 L990.0 210.4 L990.4 209.1 L990.4 207.9 L989.6 206.6 L988.5 206.2 L987.3 206.2 L986.1 206.6 L985.3 207.9 L985.3 209.1 L986.1 210.4 L987.3 211.2 M1090.3 170.3 L1090.3 178.6 M1090.3 170.3 L1092.6 170.3 L1093.6 170.7 L1093.9 171.5 L1093.9 173.1 L1093.6 173.9 L1092.6 174.3 L1090.3 174.3 M1092.3 174.3 L1094.3 178.6 M1082.4 156.9 L1082.4 165.2 M1082.4 156.9 L1084.7 156.9 L1085.7 157.3 L1086.0 158.0 L1086.0 159.6 L1085.7 160.4 L1084.7 160.8 L1082.4 160.8 M1084.4 160.8 L1086.3 165.2 M1090.7 156.9 L1094.3 156.9 L1092.3 160.0 L1093.3 160.0 L1094.0 160.4 L1094.3 160.8 L1094.6 162.0 L1094.6 162.8 L1094.3 164.0 L1093.6 164.8 L1092.7 165.2 L1091.7 165.2 L1090.7 164.8 L1090.4 164.4 L1090.1 163.6 M1098.6 156.9 L1102.2 156.9 L1100.3 160.0 L1101.2 160.0 L1101.9 160.4 L1102.2 160.8 L1102.5 162.0 L1102.5 162.8 L1102.2 164.0 L1101.6 164.8 L1100.6 165.2 L1099.6 165.2 L1098.6 164.8 L1098.3 164.4 L1098.0 163.6 M1090.3 253.6 L1090.3 262.0 M1090.3 253.6 L1092.6 253.6 L1093.6 254.0 L1093.9 254.8 L1093.9 256.4 L1093.6 257.2 L1092.6 257.6 L1090.3 257.6 M1092.3 257.6 L1094.3 262.0 M1082.4 240.2 L1082.4 248.5 M1082.4 240.2 L1084.7 240.2 L1085.7 240.6 L1086.0 241.4 L1086.0 243.0 L1085.7 243.8 L1084.7 244.2 L1082.4 244.2 M1084.4 244.2 L1086.3 248.5 M1090.7 240.2 L1094.3 240.2 L1092.3 243.4 L1093.3 243.4 L1094.0 243.8 L1094.3 244.2 L1094.6 245.3 L1094.6 246.1 L1094.3 247.3 L1093.6 248.1 L1092.7 248.5 L1091.7 248.5 L1090.7 248.1 L1090.4 247.7 L1090.1 246.9 M1100.3 240.2 L1098.0 245.7 L1102.9 245.7 M1101.6 243.0 L1101.6 248.5 M1240.3 262.0 L1240.3 270.3 M1240.3 262.0 L1242.6 262.0 L1243.6 262.4 L1243.9 263.2 L1243.9 264.7 L1243.6 265.5 L1242.6 265.9 L1240.3 265.9 M1242.3 265.9 L1244.3 270.3 M1232.4 248.5 L1232.4 256.9 M1232.4 248.5 L1234.7 248.5 L1235.7 248.9 L1236.0 249.7 L1236.0 251.3 L1235.7 252.1 L1234.7 252.5 L1232.4 252.5 M1234.4 252.5 L1236.3 256.9 M1240.7 248.5 L1244.3 248.5 L1242.3 251.7 L1243.3 251.7 L1244.0 252.1 L1244.3 252.5 L1244.6 253.7 L1244.6 254.5 L1244.3 255.7 L1243.6 256.5 L1242.7 256.9 L1241.7 256.9 L1240.7 256.5 L1240.4 256.1 L1240.1 255.3 M1252.8 251.7 L1252.0 252.9 L1250.7 253.7 L1249.4 253.7 L1248.2 252.9 L1247.7 251.7 L1247.7 250.5 L1248.2 249.3 L1249.4 248.5 L1250.7 248.5 L1252.0 249.3 L1252.8 250.9 L1252.8 254.5 L1252.0 256.1 L1250.7 256.9 L1249.0 256.9 L1248.2 256.1 M1132.0 312.0 L1132.0 320.3 M1132.0 312.0 L1134.3 312.0 L1135.3 312.4 L1135.6 313.2 L1135.6 314.7 L1135.3 315.5 L1134.3 315.9 L1132.0 315.9 M1134.0 315.9 L1135.9 320.3 M1124.1 298.5 L1124.1 306.9 M1124.1 298.5 L1126.4 298.5 L1127.3 298.9 L1127.7 299.7 L1127.7 301.3 L1127.3 302.1 L1126.4 302.5 L1124.1 302.5 M1126.0 302.5 L1128.0 306.9 M1132.4 298.5 L1136.0 298.5 L1134.0 301.7 L1135.0 301.7 L1135.6 302.1 L1136.0 302.5 L1136.3 303.7 L1136.3 304.5 L1136.0 305.7 L1135.3 306.5 L1134.3 306.9 L1133.4 306.9 L1132.4 306.5 L1132.1 306.1 L1131.7 305.3 M1144.0 299.3 L1143.2 298.5 L1141.5 298.5 L1140.2 299.3 L1139.4 300.9 L1139.4 304.9 L1140.2 306.5 L1141.5 306.9 L1142.8 306.9 L1144.0 306.1 L1144.5 304.9 L1144.5 303.7 L1144.0 302.5 L1142.8 301.7 L1141.5 301.7 L1140.2 302.5 L1139.4 303.7 M1011.8 198.2 L1011.1 197.0 L1010.0 196.6 L1008.9 196.6 L1007.8 197.4 L1007.1 198.6 L1007.1 202.9 L1007.8 204.1 L1008.9 204.9 L1010.0 204.9 L1011.1 204.5 L1011.8 203.3 M1016.3 198.2 L1017.0 197.8 L1017.9 196.6 L1017.9 204.9 M1016.3 204.9 L1019.6 204.9 M1023.9 196.6 L1027.5 196.6 L1025.5 199.7 L1026.5 199.7 L1027.2 200.1 L1027.5 200.5 L1027.8 201.7 L1027.8 202.5 L1027.5 203.7 L1026.8 204.5 L1025.9 204.9 L1024.9 204.9 L1023.9 204.5 L1023.6 204.1 L1023.3 203.3 M1027.7 231.4 L1027.0 230.2 L1025.9 229.8 L1024.8 229.8 L1023.7 230.6 L1023.0 231.8 L1023.0 236.1 L1023.7 237.3 L1024.8 238.1 L1025.9 238.1 L1027.0 237.7 L1027.7 236.5 M1105.2 206.1 L1104.0 206.8 L1103.6 207.9 L1103.6 209.0 L1104.4 210.1 L1105.6 210.8 L1110.0 210.8 L1111.2 210.1 L1112.0 209.0 L1112.0 207.9 L1111.6 206.8 L1110.4 206.1 M1105.2 201.6 L1104.8 201.0 L1103.6 200.0 L1112.0 200.0 M1112.0 201.6 L1112.0 198.4 M1104.4 190.3 L1103.6 191.1 L1103.6 192.8 L1104.4 194.1 L1106.0 194.9 L1110.0 194.9 L1111.6 194.1 L1112.0 192.8 L1112.0 191.6 L1111.2 190.3 L1110.0 189.9 L1108.8 189.9 L1107.6 190.3 L1106.8 191.6 L1106.8 192.8 L1107.6 194.1 L1108.8 194.9 M1071.8 206.1 L1070.6 206.8 L1070.2 207.9 L1070.2 209.0 L1071.0 210.1 L1072.2 210.8 L1076.6 210.8 L1077.8 210.1 L1078.6 209.0 L1078.6 207.9 L1078.2 206.8 L1077.0 206.1 M1255.2 289.4 L1254.0 290.2 L1253.6 291.3 L1253.6 292.4 L1254.4 293.4 L1255.6 294.2 L1260.0 294.2 L1261.2 293.4 L1262.0 292.4 L1262.0 291.3 L1261.6 290.2 L1260.4 289.4 M1255.2 285.0 L1254.8 284.3 L1253.6 283.3 L1262.0 283.3 M1262.0 285.0 L1262.0 281.7 M1256.8 273.2 L1258.0 274.0 L1258.8 275.3 L1258.8 276.6 L1258.0 277.9 L1256.8 278.3 L1255.6 278.3 L1254.4 277.9 L1253.6 276.6 L1253.6 275.3 L1254.4 274.0 L1256.0 273.2 L1259.6 273.2 L1261.2 274.0 L1262.0 275.3 L1262.0 277.0 L1261.2 277.9 M1221.8 289.4 L1220.6 290.2 L1220.2 291.3 L1220.2 292.4 L1221.0 293.4 L1222.2 294.2 L1226.6 294.2 L1227.8 293.4 L1228.6 292.4 L1228.6 291.3 L1228.2 290.2 L1227.0 289.4 M1153.5 273.2 L1152.8 272.0 L1151.7 271.6 L1150.6 271.6 L1149.5 272.4 L1148.8 273.6 L1148.8 277.9 L1149.5 279.1 L1150.6 279.9 L1151.7 279.9 L1152.8 279.5 L1153.5 278.3 M1158.0 273.2 L1158.6 272.8 L1159.6 271.6 L1159.6 279.9 M1158.0 279.9 L1161.2 279.9 M1164.3 271.6 L1170.1 271.6 L1166.6 279.9 M1169.4 306.4 L1168.6 305.2 L1167.6 304.8 L1166.5 304.8 L1165.4 305.6 L1164.6 306.8 L1164.6 311.1 L1165.4 312.3 L1166.5 313.1 L1167.6 313.1 L1168.6 312.7 L1169.4 311.5 M1170.6 224.2 L1177.7 224.2 L1179.1 223.8 L1180.1 223.1 L1180.6 221.9 L1180.6 221.1 L1180.1 219.9 L1179.1 219.2 L1177.7 218.8 L1170.6 218.8 M1170.6 209.5 L1170.6 213.5 L1174.9 213.8 L1174.4 213.5 L1173.9 212.3 L1173.9 211.1 L1174.4 209.9 L1175.3 209.2 L1176.8 208.8 L1177.7 208.8 L1179.1 209.2 L1180.1 209.9 L1180.6 211.1 L1180.6 212.3 L1180.1 213.5 L1179.6 213.8 L1178.7 214.2 M1145.4 246.5 L1155.4 246.5 M1155.4 246.5 L1155.4 241.0 M1145.4 238.2 L1155.4 238.2 M1145.4 234.6 L1155.4 234.6 M1155.4 234.6 L1155.4 229.1 M1145.4 225.4 L1145.4 221.1 L1149.2 223.4 L1149.2 222.2 L1149.7 221.4 L1150.1 221.1 L1151.6 220.7 L1152.5 220.7 L1153.9 221.1 L1154.9 221.8 L1155.4 223.0 L1155.4 224.2 L1154.9 225.4 L1154.4 225.7 L1153.5 226.1 M1212.4 414.5 L1211.4 415.3 L1210.9 416.5 L1210.9 418.1 L1211.4 419.2 L1212.4 420.0 L1213.3 420.0 L1214.3 419.6 L1214.7 419.2 L1215.2 418.4 L1216.2 416.1 L1216.7 415.3 L1217.1 414.9 L1218.1 414.5 L1219.5 414.5 L1220.5 415.3 L1220.9 416.5 L1220.9 418.1 L1220.5 419.2 L1219.5 420.0 M1210.9 408.1 L1211.4 408.8 L1212.4 409.6 L1213.3 410.0 L1214.7 410.4 L1217.1 410.4 L1218.6 410.0 L1219.5 409.6 L1220.5 408.8 L1220.9 408.1 L1220.9 406.5 L1220.5 405.7 L1219.5 404.9 L1218.6 404.5 L1217.1 404.2 L1214.7 404.2 L1213.3 404.5 L1212.4 404.9 L1211.4 405.7 L1210.9 406.5 L1210.9 408.1 M1210.9 400.1 L1220.9 400.1 M1212.8 390.4 L1211.4 391.3 L1210.9 392.6 L1210.9 393.9 L1211.9 395.2 L1213.3 396.1 L1218.6 396.1 L1220.0 395.2 L1220.9 393.9 L1220.9 392.6 L1220.5 391.3 L1219.0 390.4 M1210.9 384.4 L1211.4 385.9 L1212.4 386.4 L1213.3 386.4 L1214.3 385.9 L1214.7 384.9 L1215.2 383.0 L1215.7 381.5 L1216.7 380.5 L1217.6 380.0 L1219.0 380.0 L1220.0 380.5 L1220.5 381.0 L1220.9 382.5 L1220.9 384.4 L1220.5 385.9 L1220.0 386.4 L1219.0 386.9 L1217.6 386.9 L1216.7 386.4 L1215.7 385.4 L1215.2 383.9 L1214.7 382.0 L1214.3 381.0 L1213.3 380.5 L1212.4 380.5 L1211.4 381.0 L1210.9 382.5 L1210.9 384.4 M1294.6 407.4 L1301.7 407.4 L1303.1 407.0 L1304.1 406.2 L1304.6 405.0 L1304.6 404.2 L1304.1 403.1 L1303.1 402.3 L1301.7 401.9 L1294.6 401.9 M1294.6 396.6 L1294.6 392.3 L1298.4 394.6 L1298.4 393.5 L1298.9 392.7 L1299.3 392.3 L1300.8 391.9 L1301.7 391.9 L1303.1 392.3 L1304.1 393.1 L1304.6 394.2 L1304.6 395.4 L1304.1 396.6 L1303.6 397.0 L1302.7 397.4 M1207.0 528.6 L1207.0 537.0 M1207.0 528.6 L1209.3 528.6 L1210.3 529.0 L1210.6 529.8 L1210.6 531.4 L1210.3 532.2 L1209.3 532.6 L1207.0 532.6 M1209.0 532.6 L1210.9 537.0 M1199.1 515.2 L1199.1 523.5 M1199.1 515.2 L1201.4 515.2 L1202.3 515.6 L1202.7 516.4 L1202.7 518.0 L1202.3 518.8 L1201.4 519.2 L1199.1 519.2 M1201.0 519.2 L1203.0 523.5 M1207.4 515.2 L1211.0 515.2 L1209.0 518.4 L1210.0 518.4 L1210.6 518.8 L1211.0 519.2 L1211.3 520.3 L1211.3 521.1 L1211.0 522.3 L1210.3 523.1 L1209.3 523.5 L1208.4 523.5 L1207.4 523.1 L1207.1 522.7 L1206.7 521.9 M1216.1 515.2 L1214.9 515.6 L1214.5 516.4 L1214.5 517.2 L1214.9 518.0 L1215.7 518.4 L1217.3 518.8 L1218.6 519.2 L1219.4 519.9 L1219.8 520.7 L1219.8 521.9 L1219.4 522.7 L1219.0 523.1 L1217.7 523.5 L1216.1 523.5 L1214.9 523.1 L1214.5 522.7 L1214.1 521.9 L1214.1 520.7 L1214.5 519.9 L1215.3 519.2 L1216.5 518.8 L1218.2 518.4 L1219.0 518.0 L1219.4 517.2 L1219.4 516.4 L1219.0 515.6 L1217.7 515.2 L1216.1 515.2 M1273.7 528.6 L1273.7 537.0 M1273.7 528.6 L1276.0 528.6 L1276.9 529.0 L1277.3 529.8 L1277.3 531.4 L1276.9 532.2 L1276.0 532.6 L1273.7 532.6 M1275.6 532.6 L1277.6 537.0 M1265.7 515.2 L1265.7 523.5 M1265.7 515.2 L1268.0 515.2 L1269.0 515.6 L1269.3 516.4 L1269.3 518.0 L1269.0 518.8 L1268.0 519.2 L1265.7 519.2 M1267.7 519.2 L1269.7 523.5 M1275.7 515.2 L1273.4 520.7 L1278.3 520.7 M1277.0 518.0 L1277.0 523.5 M1282.6 515.2 L1284.6 515.2 L1285.6 516.0 L1285.9 516.8 L1285.9 521.9 L1285.6 522.7 L1284.6 523.5 L1282.6 523.5 L1281.7 522.7 L1281.3 521.9 L1281.3 516.8 L1281.7 516.0 L1282.6 515.2 M1337.4 385.3 L1345.7 385.3 M1337.4 385.3 L1337.4 383.0 L1337.8 382.0 L1338.6 381.7 L1340.1 381.7 L1340.9 382.0 L1341.3 383.0 L1341.3 385.3 M1341.3 383.3 L1345.7 381.4 M1323.8 393.2 L1332.1 393.2 M1323.8 393.2 L1323.8 390.9 L1324.2 390.0 L1325.0 389.6 L1326.5 389.6 L1327.3 390.0 L1327.7 390.9 L1327.7 393.2 M1327.7 391.3 L1332.1 389.3 M1323.8 383.3 L1329.3 385.6 L1329.3 380.7 M1326.5 382.0 L1332.1 382.0 M1325.4 376.7 L1325.0 376.0 L1323.8 375.0 L1332.1 375.0 M1332.1 376.7 L1332.1 373.4 M1370.7 368.6 L1379.0 368.6 M1370.7 368.6 L1370.7 366.3 L1371.1 365.4 L1371.9 365.0 L1373.5 365.0 L1374.3 365.4 L1374.7 366.3 L1374.7 368.6 M1374.7 366.7 L1379.0 364.7 M1357.1 376.6 L1365.4 376.6 M1357.1 376.6 L1357.1 374.3 L1357.5 373.3 L1358.3 373.0 L1359.9 373.0 L1360.7 373.3 L1361.1 374.3 L1361.1 376.6 M1361.1 374.6 L1365.4 372.7 M1357.1 366.6 L1362.7 368.9 L1362.7 364.0 M1359.9 365.3 L1365.4 365.3 M1359.1 361.0 L1358.7 361.0 L1357.9 360.7 L1357.5 360.3 L1357.1 359.7 L1357.1 358.1 L1357.5 357.4 L1357.9 357.1 L1358.7 356.8 L1359.5 356.8 L1360.3 357.1 L1361.5 357.7 L1365.4 361.3 L1365.4 356.1 M1398.7 403.6 L1398.7 412.0 M1398.7 403.6 L1401.0 403.6 L1401.9 404.0 L1402.3 404.8 L1402.3 406.4 L1401.9 407.2 L1401.0 407.6 L1398.7 407.6 M1400.6 407.6 L1402.6 412.0 M1390.7 390.2 L1390.7 398.5 M1390.7 390.2 L1393.0 390.2 L1394.0 390.6 L1394.3 391.4 L1394.3 393.0 L1394.0 393.8 L1393.0 394.2 L1390.7 394.2 M1392.7 394.2 L1394.7 398.5 M1400.7 390.2 L1398.4 395.7 L1403.3 395.7 M1402.0 393.0 L1402.0 398.5 M1407.0 390.2 L1410.6 390.2 L1408.6 393.4 L1409.6 393.4 L1410.2 393.8 L1410.6 394.2 L1410.9 395.3 L1410.9 396.1 L1410.6 397.3 L1409.9 398.1 L1408.9 398.5 L1408.0 398.5 L1407.0 398.1 L1406.7 397.7 L1406.3 396.9 M1448.7 403.6 L1448.7 412.0 M1448.7 403.6 L1451.0 403.6 L1451.9 404.0 L1452.3 404.8 L1452.3 406.4 L1451.9 407.2 L1451.0 407.6 L1448.7 407.6 M1450.6 407.6 L1452.6 412.0 M1440.7 390.2 L1440.7 398.5 M1440.7 390.2 L1443.0 390.2 L1444.0 390.6 L1444.3 391.4 L1444.3 393.0 L1444.0 393.8 L1443.0 394.2 L1440.7 394.2 M1442.7 394.2 L1444.7 398.5 M1450.7 390.2 L1448.4 395.7 L1453.3 395.7 M1452.0 393.0 L1452.0 398.5 M1458.6 390.2 L1456.3 395.7 L1461.2 395.7 M1459.9 393.0 L1459.9 398.5 M1448.7 437.0 L1448.7 445.3 M1448.7 437.0 L1451.0 437.0 L1451.9 437.4 L1452.3 438.2 L1452.3 439.7 L1451.9 440.5 L1451.0 440.9 L1448.7 440.9 M1450.6 440.9 L1452.6 445.3 M1440.7 423.5 L1440.7 431.9 M1440.7 423.5 L1443.0 423.5 L1444.0 423.9 L1444.3 424.7 L1444.3 426.3 L1444.0 427.1 L1443.0 427.5 L1440.7 427.5 M1442.7 427.5 L1444.7 431.9 M1450.7 423.5 L1448.4 429.1 L1453.3 429.1 M1452.0 426.3 L1452.0 431.9 M1460.2 423.5 L1457.0 423.5 L1456.7 427.1 L1457.0 426.7 L1458.0 426.3 L1458.9 426.3 L1459.9 426.7 L1460.6 427.5 L1460.9 428.7 L1460.9 429.5 L1460.6 430.7 L1459.9 431.5 L1458.9 431.9 L1458.0 431.9 L1457.0 431.5 L1456.7 431.1 L1456.3 430.3 M1221.9 481.1 L1220.7 481.8 L1220.3 482.9 L1220.3 484.0 L1221.1 485.1 L1222.3 485.8 L1226.6 485.8 L1227.8 485.1 L1228.6 484.0 L1228.6 482.9 L1228.2 481.8 L1227.0 481.1 M1221.9 476.6 L1221.5 476.0 L1220.3 475.0 L1228.6 475.0 M1228.6 476.6 L1228.6 473.4 M1220.3 468.2 L1220.7 469.4 L1221.5 469.8 L1222.3 469.8 L1223.1 469.4 L1223.5 468.6 L1223.9 467.0 L1224.3 465.8 L1225.0 465.0 L1225.8 464.5 L1227.0 464.5 L1227.8 465.0 L1228.2 465.4 L1228.6 466.6 L1228.6 468.2 L1228.2 469.4 L1227.8 469.8 L1227.0 470.3 L1225.8 470.3 L1225.0 469.8 L1224.3 469.0 L1223.9 467.8 L1223.5 466.2 L1223.1 465.4 L1222.3 465.0 L1221.5 465.0 L1220.7 465.4 L1220.3 466.6 L1220.3 468.2 M1188.5 481.1 L1187.3 481.8 L1186.9 482.9 L1186.9 484.0 L1187.7 485.1 L1188.9 485.8 L1193.2 485.8 L1194.4 485.1 L1195.2 484.0 L1195.2 482.9 L1194.8 481.8 L1193.6 481.1 M1288.5 481.1 L1287.4 481.8 L1287.0 482.9 L1287.0 484.0 L1287.7 485.1 L1288.9 485.8 L1293.3 485.8 L1294.5 485.1 L1295.3 484.0 L1295.3 482.9 L1294.9 481.8 L1293.7 481.1 M1288.9 477.6 L1288.5 477.6 L1287.7 477.3 L1287.4 477.0 L1287.0 476.3 L1287.0 474.7 L1287.4 474.0 L1287.7 473.7 L1288.5 473.4 L1289.3 473.4 L1290.1 473.7 L1291.3 474.4 L1295.3 477.9 L1295.3 472.7 M1287.0 468.4 L1287.0 466.4 L1287.7 465.5 L1288.5 465.1 L1293.7 465.1 L1294.5 465.5 L1295.3 466.4 L1295.3 468.4 L1294.5 469.4 L1293.7 469.7 L1288.5 469.7 L1287.7 469.4 L1287.0 468.4 M1255.1 481.1 L1254.0 481.8 L1253.6 482.9 L1253.6 484.0 L1254.3 485.1 L1255.5 485.8 L1259.9 485.8 L1261.1 485.1 L1261.9 484.0 L1261.9 482.9 L1261.5 481.8 L1260.3 481.1 M1320.2 414.8 L1319.4 413.6 L1318.4 413.2 L1317.3 413.2 L1316.2 414.0 L1315.4 415.2 L1315.4 419.6 L1316.2 420.8 L1317.3 421.6 L1318.4 421.6 L1319.4 421.2 L1320.2 420.0 M1323.7 415.2 L1323.7 414.8 L1324.0 414.0 L1324.3 413.6 L1325.0 413.2 L1326.6 413.2 L1327.2 413.6 L1327.6 414.0 L1327.9 414.8 L1327.9 415.6 L1327.6 416.4 L1326.9 417.6 L1323.3 421.6 L1328.5 421.6 M1331.6 415.2 L1331.6 414.8 L1331.9 414.0 L1332.2 413.6 L1332.9 413.2 L1334.5 413.2 L1335.2 413.6 L1335.5 414.0 L1335.8 414.8 L1335.8 415.6 L1335.5 416.4 L1334.8 417.6 L1331.3 421.6 L1336.5 421.6 M1336.0 448.0 L1335.3 446.8 L1334.2 446.4 L1333.1 446.4 L1332.0 447.2 L1331.3 448.4 L1331.3 452.8 L1332.0 454.0 L1333.1 454.8 L1334.2 454.8 L1335.3 454.4 L1336.0 453.2 M1320.2 298.2 L1319.4 297.0 L1318.4 296.6 L1317.3 296.6 L1316.2 297.4 L1315.4 298.6 L1315.4 302.9 L1316.2 304.1 L1317.3 304.9 L1318.4 304.9 L1319.4 304.5 L1320.2 303.3 M1323.7 298.6 L1323.7 298.2 L1324.0 297.4 L1324.3 297.0 L1325.0 296.6 L1326.6 296.6 L1327.2 297.0 L1327.6 297.4 L1327.9 298.2 L1327.9 299.0 L1327.6 299.7 L1326.9 300.9 L1323.3 304.9 L1328.5 304.9 M1332.6 298.2 L1333.2 297.8 L1334.2 296.6 L1334.2 304.9 M1332.6 304.9 L1335.8 304.9 M1336.0 331.4 L1335.3 330.2 L1334.2 329.8 L1333.1 329.8 L1332.0 330.6 L1331.3 331.8 L1331.3 336.1 L1332.0 337.3 L1333.1 338.1 L1334.2 338.1 L1335.3 337.7 L1336.0 336.5 M1451.5 337.3 L1451.5 344.5 L1451.9 345.9 L1452.7 346.9 L1453.9 347.3 L1454.6 347.3 L1455.8 346.9 L1456.6 345.9 L1457.0 344.5 L1457.0 337.3 M1460.7 337.3 L1467.8 337.3 L1463.5 347.3 M1429.9 313.0 L1429.9 323.0 M1429.9 323.0 L1435.4 323.0 M1438.2 313.0 L1438.2 323.0 M1441.8 313.0 L1441.8 323.0 M1441.8 323.0 L1447.3 323.0 M1451.0 313.0 L1455.3 313.0 L1452.9 316.8 L1454.1 316.8 L1454.9 317.3 L1455.3 317.8 L1455.7 319.2 L1455.7 320.2 L1455.3 321.6 L1454.5 322.6 L1453.3 323.0 L1452.2 323.0 L1451.0 322.6 L1450.6 322.1 L1450.2 321.1" stroke="#008484" stroke-width="1" fill="none" stroke-linecap="butt" stroke-linejoin="miter" shape-rendering="crispEdges"/>
<path d="M531.6 371.0 L537.1 373.3 L537.1 368.4 M534.3 369.7 L539.9 369.7 M556.6 369.4 L556.6 372.6 L560.1 373.0 L559.7 372.6 L559.3 371.7 L559.3 370.7 L559.7 369.7 L560.5 369.1 L561.7 368.7 L562.5 368.7 L563.7 369.1 L564.5 369.7 L564.9 370.7 L564.9 371.7 L564.5 372.6 L564.1 373.0 L563.3 373.3 M582.4 368.9 L581.6 369.7 L581.6 371.4 L582.4 372.7 L584.0 373.5 L587.9 373.5 L589.5 372.7 L589.9 371.4 L589.9 370.2 L589.1 368.9 L587.9 368.5 L586.7 368.5 L585.5 368.9 L584.7 370.2 L584.7 371.4 L585.5 372.7 L586.7 373.5 M531.6 431.0 L531.6 427.4 L534.7 429.3 L534.7 428.4 L535.1 427.7 L535.5 427.4 L536.7 427.1 L537.5 427.1 L538.7 427.4 L539.5 428.0 L539.9 429.0 L539.9 430.0 L539.5 431.0 L539.1 431.3 L538.3 431.6 M558.6 431.6 L558.2 431.6 L557.4 431.3 L557.0 431.0 L556.6 430.3 L556.6 428.7 L557.0 428.0 L557.4 427.7 L558.2 427.4 L559.0 427.4 L559.7 427.7 L560.9 428.4 L564.9 431.9 L564.9 426.7 M583.2 430.6 L582.8 430.0 L581.6 429.0 L589.9 429.0 M589.9 430.6 L589.9 427.4 M514.7 484.3 L515.1 485.5 L515.9 485.9 L516.7 485.9 L517.5 485.5 L517.9 484.7 L518.3 483.1 L518.7 481.9 L519.5 481.1 L520.3 480.6 L521.4 480.6 L522.2 481.1 L522.6 481.5 L523.0 482.7 L523.0 484.3 L522.6 485.5 L522.2 485.9 L521.4 486.4 L520.3 486.4 L519.5 485.9 L518.7 485.1 L518.3 483.9 L517.9 482.3 L517.5 481.5 L516.7 481.1 L515.9 481.1 L515.1 481.5 L514.7 482.7 L514.7 484.3 M551.4 481.0 L552.6 481.8 L553.4 483.1 L553.4 484.3 L552.6 485.6 L551.4 486.0 L550.2 486.0 L549.0 485.6 L548.2 484.3 L548.2 483.1 L549.0 481.8 L550.6 481.0 L554.2 481.0 L555.8 481.8 L556.6 483.1 L556.6 484.8 L555.8 485.6 M583.2 488.8 L582.8 488.1 L581.6 487.1 L589.9 487.1 M589.9 488.8 L589.9 485.5 M581.6 480.5 L581.6 478.6 L582.4 477.6 L583.2 477.3 L588.3 477.3 L589.1 477.6 L589.9 478.6 L589.9 480.5 L589.1 481.5 L588.3 481.8 L583.2 481.8 L582.4 481.5 L581.6 480.5 M716.3 488.8 L715.9 488.1 L714.7 487.1 L723.0 487.1 M723.0 488.8 L723.0 485.5 M714.7 479.5 L720.3 481.8 L720.3 476.9 M717.5 478.2 L723.0 478.2 M649.8 488.8 L649.4 488.1 L648.2 487.1 L656.6 487.1 M656.6 488.8 L656.6 485.5 M650.2 481.8 L649.8 481.8 L649.0 481.5 L648.6 481.2 L648.2 480.5 L648.2 478.9 L648.6 478.2 L649.0 477.9 L649.8 477.6 L650.6 477.6 L651.4 477.9 L652.6 478.6 L656.6 482.1 L656.6 476.9 M683.2 488.8 L682.8 488.1 L681.6 487.1 L689.9 487.1 M689.9 488.8 L689.9 485.5 M681.6 481.2 L681.6 477.6 L684.7 479.5 L684.7 478.6 L685.1 477.9 L685.5 477.6 L686.7 477.3 L687.5 477.3 L688.7 477.6 L689.5 478.2 L689.9 479.2 L689.9 480.2 L689.5 481.2 L689.1 481.5 L688.3 481.8 M514.7 669.8 L514.7 663.9 L523.0 667.5 M549.0 664.7 L548.2 665.6 L548.2 667.3 L549.0 668.5 L550.6 669.4 L554.6 669.4 L556.2 668.5 L556.6 667.3 L556.6 666.0 L555.8 664.7 L554.6 664.3 L553.4 664.3 L552.2 664.7 L551.4 666.0 L551.4 667.3 L552.2 668.5 L553.4 669.4 M581.6 665.2 L581.6 668.5 L585.1 668.8 L584.7 668.5 L584.3 667.5 L584.3 666.5 L584.7 665.5 L585.5 664.9 L586.7 664.6 L587.5 664.6 L588.7 664.9 L589.5 665.5 L589.9 666.5 L589.9 667.5 L589.5 668.5 L589.1 668.8 L588.3 669.1 M716.3 668.1 L715.9 667.5 L714.7 666.5 L723.0 666.5 M723.0 668.1 L723.0 664.9 M648.2 668.5 L648.2 664.9 L651.4 666.8 L651.4 665.9 L651.8 665.2 L652.2 664.9 L653.4 664.6 L654.2 664.6 L655.4 664.9 L656.2 665.5 L656.6 666.5 L656.6 667.5 L656.2 668.5 L655.8 668.8 L655.0 669.1 M683.6 669.1 L683.2 669.1 L682.4 668.8 L682.0 668.5 L681.6 667.8 L681.6 666.2 L682.0 665.5 L682.4 665.2 L683.2 664.9 L684.0 664.9 L684.7 665.2 L685.9 665.9 L689.9 669.4 L689.9 664.2 M616.5 492.6 L616.1 491.9 L614.9 490.9 L623.2 490.9 M623.2 492.6 L623.2 489.3 M616.5 484.6 L616.1 484.0 L614.9 483.0 L623.2 483.0 M623.2 484.6 L623.2 481.4 M614.9 663.3 L620.5 665.6 L620.5 660.7 M617.7 662.0 L623.2 662.0 M733.6 723.3 L733.2 723.3 L732.4 723.0 L732.0 722.6 L731.6 722.0 L731.6 720.4 L732.0 719.7 L732.4 719.4 L733.2 719.1 L734.0 719.1 L734.7 719.4 L735.9 720.0 L739.9 723.6 L739.9 718.4 M766.5 722.3 L766.1 721.7 L764.9 720.7 L773.2 720.7 M773.2 722.3 L773.2 719.1 M748.2 781.0 L748.2 777.4 L751.4 779.3 L751.4 778.4 L751.8 777.7 L752.2 777.4 L753.4 777.1 L754.2 777.1 L755.4 777.4 L756.2 778.0 L756.6 779.0 L756.6 780.0 L756.2 781.0 L755.8 781.3 L755.0 781.6 M884.4 347.8 L890.3 347.8 L886.7 356.2 M889.5 382.0 L888.6 381.2 L886.9 381.2 L885.7 382.0 L884.8 383.6 L884.8 387.5 L885.7 389.1 L886.9 389.5 L888.2 389.5 L889.5 388.7 L889.9 387.5 L889.9 386.3 L889.5 385.1 L888.2 384.3 L886.9 384.3 L885.7 385.1 L884.8 386.3 M889.0 414.5 L885.7 414.5 L885.4 418.1 L885.7 417.7 L886.7 417.3 L887.7 417.3 L888.7 417.7 L889.3 418.5 L889.6 419.7 L889.6 420.5 L889.3 421.6 L888.7 422.4 L887.7 422.8 L886.7 422.8 L885.7 422.4 L885.4 422.0 L885.1 421.2 M887.4 447.8 L885.1 453.4 L890.0 453.4 M888.7 450.6 L888.7 456.2 M885.7 481.2 L889.3 481.2 L887.4 484.3 L888.3 484.3 L889.0 484.7 L889.3 485.1 L889.6 486.3 L889.6 487.1 L889.3 488.3 L888.7 489.1 L887.7 489.5 L886.7 489.5 L885.7 489.1 L885.4 488.7 L885.1 487.9 M885.1 516.5 L885.1 516.1 L885.4 515.3 L885.7 514.9 L886.4 514.5 L888.0 514.5 L888.7 514.9 L889.0 515.3 L889.3 516.1 L889.3 516.9 L889.0 517.7 L888.3 518.9 L884.8 522.8 L890.0 522.8 M886.1 549.4 L886.7 549.0 L887.7 547.8 L887.7 556.2 M886.1 556.2 L889.3 556.2 M978.2 347.8 L977.0 348.2 L976.6 349.0 L976.6 349.8 L977.0 350.6 L977.8 351.0 L979.4 351.4 L980.7 351.8 L981.5 352.6 L981.9 353.4 L981.9 354.6 L981.5 355.4 L981.1 355.8 L979.8 356.2 L978.2 356.2 L977.0 355.8 L976.6 355.4 L976.2 354.6 L976.2 353.4 L976.6 352.6 L977.4 351.8 L978.6 351.4 L980.3 351.0 L981.1 350.6 L981.5 349.8 L981.5 349.0 L981.1 348.2 L979.8 347.8 L978.2 347.8 M981.6 384.3 L980.7 385.5 L979.5 386.3 L978.2 386.3 L976.9 385.5 L976.5 384.3 L976.5 383.2 L976.9 382.0 L978.2 381.2 L979.5 381.2 L980.7 382.0 L981.6 383.6 L981.6 387.1 L980.7 388.7 L979.5 389.5 L977.8 389.5 L976.9 388.7 M973.8 416.1 L974.4 415.7 L975.4 414.5 L975.4 422.8 M973.8 422.8 L977.0 422.8 M982.0 414.5 L984.0 414.5 L985.0 415.3 L985.3 416.1 L985.3 421.2 L985.0 422.0 L984.0 422.8 L982.0 422.8 L981.1 422.0 L980.7 421.2 L980.7 416.1 L981.1 415.3 L982.0 414.5 M973.8 449.4 L974.4 449.0 L975.4 447.8 L975.4 456.2 M973.8 456.2 L977.0 456.2 M981.7 449.4 L982.4 449.0 L983.3 447.8 L983.3 456.2 M981.7 456.2 L985.0 456.2 M973.8 482.8 L974.4 482.4 L975.4 481.2 L975.4 489.5 M973.8 489.5 L977.0 489.5 M980.7 483.2 L980.7 482.8 L981.1 482.0 L981.4 481.6 L982.0 481.2 L983.7 481.2 L984.3 481.6 L984.6 482.0 L985.0 482.8 L985.0 483.6 L984.6 484.3 L984.0 485.5 L980.4 489.5 L985.6 489.5 M973.8 516.1 L974.4 515.7 L975.4 514.5 L975.4 522.8 M973.8 522.8 L977.0 522.8 M981.4 514.5 L985.0 514.5 L983.0 517.7 L984.0 517.7 L984.6 518.1 L985.0 518.5 L985.3 519.7 L985.3 520.5 L985.0 521.6 L984.3 522.4 L983.3 522.8 L982.4 522.8 L981.4 522.4 L981.1 522.0 L980.7 521.2 M973.8 549.4 L974.4 549.0 L975.4 547.8 L975.4 556.2 M973.8 556.2 L977.0 556.2 M983.0 547.8 L980.7 553.4 L985.6 553.4 M984.3 550.6 L984.3 556.2 M1144.1 206.2 L1147.7 206.2 L1145.7 209.3 L1146.7 209.3 L1147.3 209.7 L1147.7 210.1 L1148.0 211.3 L1148.0 212.1 L1147.7 213.3 L1147.0 214.1 L1146.0 214.5 L1145.1 214.5 L1144.1 214.1 L1143.8 213.7 L1143.4 212.9 M1202.7 191.1 L1203.4 190.7 L1204.4 189.5 L1204.4 197.8 M1202.7 197.8 L1206.0 197.8 M1201.8 224.8 L1201.8 224.4 L1202.1 223.6 L1202.4 223.2 L1203.1 222.8 L1204.7 222.8 L1205.3 223.2 L1205.7 223.6 L1206.0 224.4 L1206.0 225.2 L1205.7 226.0 L1205.0 227.2 L1201.4 231.2 L1206.6 231.2 M1189.9 352.7 L1189.9 356.0 L1193.5 356.3 L1193.1 356.0 L1192.7 355.0 L1192.7 354.0 L1193.1 353.0 L1193.9 352.4 L1195.1 352.1 L1195.9 352.1 L1197.0 352.4 L1197.8 353.0 L1198.2 354.0 L1198.2 355.0 L1197.8 356.0 L1197.4 356.3 L1196.6 356.6 M1224.0 352.2 L1223.2 353.1 L1223.2 354.8 L1224.0 356.0 L1225.6 356.9 L1229.6 356.9 L1231.2 356.0 L1231.6 354.8 L1231.6 353.5 L1230.8 352.2 L1229.6 351.8 L1228.4 351.8 L1227.2 352.2 L1226.4 353.5 L1226.4 354.8 L1227.2 356.0 L1228.4 356.9 M1256.6 357.3 L1256.6 351.4 L1264.9 355.0 M1289.9 355.1 L1290.3 356.4 L1291.1 356.8 L1291.9 356.8 L1292.7 356.4 L1293.1 355.6 L1293.5 353.9 L1293.9 352.7 L1294.7 351.9 L1295.5 351.5 L1296.6 351.5 L1297.4 351.9 L1297.8 352.3 L1298.2 353.5 L1298.2 355.1 L1297.8 356.4 L1297.4 356.8 L1296.6 357.2 L1295.5 357.2 L1294.7 356.8 L1293.9 356.0 L1293.5 354.7 L1293.1 353.1 L1292.7 352.3 L1291.9 351.9 L1291.1 351.9 L1290.3 352.3 L1289.9 353.5 L1289.9 355.1 M1189.9 446.0 L1195.5 448.3 L1195.5 443.4 M1192.7 444.7 L1198.2 444.7 M1223.2 447.6 L1223.2 444.1 L1226.4 446.0 L1226.4 445.0 L1226.8 444.4 L1227.2 444.1 L1228.4 443.7 L1229.2 443.7 L1230.4 444.1 L1231.2 444.7 L1231.6 445.7 L1231.6 446.7 L1231.2 447.6 L1230.8 448.0 L1230.0 448.3 M1258.6 448.3 L1258.2 448.3 L1257.4 448.0 L1257.0 447.6 L1256.6 447.0 L1256.6 445.4 L1257.0 444.7 L1257.4 444.4 L1258.2 444.1 L1259.0 444.1 L1259.7 444.4 L1260.9 445.0 L1264.9 448.6 L1264.9 443.4 M1291.5 447.3 L1291.1 446.7 L1289.9 445.7 L1298.2 445.7 M1298.2 447.3 L1298.2 444.1 M1448.2 314.3 L1448.2 310.7 L1451.4 312.7 L1451.4 311.7 L1451.8 311.0 L1452.2 310.7 L1453.4 310.4 L1454.2 310.4 L1455.4 310.7 L1456.2 311.4 L1456.6 312.3 L1456.6 313.3 L1456.2 314.3 L1455.8 314.6 L1455.0 314.9 M1433.6 373.3 L1433.2 373.3 L1432.4 373.0 L1432.0 372.6 L1431.6 372.0 L1431.6 370.4 L1432.0 369.7 L1432.4 369.4 L1433.2 369.1 L1434.0 369.1 L1434.7 369.4 L1435.9 370.0 L1439.9 373.6 L1439.9 368.4 M1466.5 372.3 L1466.1 371.7 L1464.9 370.7 L1473.2 370.7 M1473.2 372.3 L1473.2 369.1" stroke="#840000" stroke-width="1" fill="none" stroke-linecap="butt" stroke-linejoin="miter" shape-rendering="crispEdges"/>
<path d="M946 333.5 H971 M958.5 321 V346" stroke="#000" stroke-width="1" fill="none"/>
</svg>
<div class="abs" style="left:1626px;top:89px;width:14px;height:857px;background:#c3c1bb"></div>
<div class="abs" style="left:39px;top:950px;width:1583px;height:14px;background:#c3c1bb"></div>
<div class="abs" style="left:1625px;top:89px;width:1px;height:857px;background:#918f8a"></div>
<div class="abs" style="left:1640px;top:89px;width:1px;height:875px;background:#fff"></div>
<div class="abs" style="left:1641px;top:89px;width:1px;height:875px;background:#a9a7a2"></div>
<div class="abs" style="left:1642px;top:89px;width:1px;height:875px;background:#fff"></div>
<div class="abs" style="left:1626px;top:90px;width:14px;height:14px;background:#dcdad5;border-top:1px solid #fff;border-left:1px solid #fff;border-right:1px solid #000;border-bottom:1px solid #000;box-shadow:inset -1px -1px 0 #a9a7a2"><svg width="13" height="13" viewBox="0.5 0.5 13 13" style="position:absolute;left:-1px;top:-1px"><polygon points="3.5,9 10.5,9 7,5" fill="#000"/></svg></div>
<div class="abs" style="left:1626px;top:459px;width:14px;height:278px;background:#dcdad5;border-top:1px solid #fff;border-left:1px solid #fff;border-right:1px solid #000;border-bottom:1px solid #000;box-shadow:inset -1px -1px 0 #a9a7a2"></div>
<div class="abs" style="left:1626px;top:931px;width:14px;height:14px;background:#dcdad5;border-top:1px solid #fff;border-left:1px solid #fff;border-right:1px solid #000;border-bottom:1px solid #000;box-shadow:inset -1px -1px 0 #a9a7a2"><svg width="13" height="13" viewBox="0.5 0.5 13 13" style="position:absolute;left:-1px;top:-1px"><polygon points="3.5,5 10.5,5 7,9" fill="#000"/></svg></div>
<div class="abs" style="left:39px;top:949px;width:1583px;height:1px;background:#918f8a"></div>
<div class="abs" style="left:39px;top:964px;width:1583px;height:1px;background:#fff"></div>
<div class="abs" style="left:40px;top:950px;width:14px;height:14px;background:#dcdad5;border-top:1px solid #fff;border-left:1px solid #fff;border-right:1px solid #000;border-bottom:1px solid #000;box-shadow:inset -1px -1px 0 #a9a7a2"><svg width="13" height="13" viewBox="0.5 0.5 13 13" style="position:absolute;left:-1px;top:-1px"><polygon points="9,3.5 9,10.5 5,7" fill="#000"/></svg></div>
<div class="abs" style="left:410px;top:950px;width:1107px;height:14px;background:#dcdad5;border-top:1px solid #fff;border-left:1px solid #fff;border-right:1px solid #000;border-bottom:1px solid #000;box-shadow:inset -1px -1px 0 #a9a7a2"></div>
<div class="abs" style="left:1607px;top:950px;width:14px;height:14px;background:#dcdad5;border-top:1px solid #fff;border-left:1px solid #fff;border-right:1px solid #000;border-bottom:1px solid #000;box-shadow:inset -1px -1px 0 #a9a7a2"><svg width="13" height="13" viewBox="0.5 0.5 13 13" style="position:absolute;left:-1px;top:-1px"><polygon points="5,3.5 5,10.5 9,7" fill="#000"/></svg></div>
<div class="sel" style="left:3px;top:95px;width:32px;height:32px"></div>
<div class="sel" style="left:3px;top:163px;width:32px;height:32px"></div>
<div class="sel" style="left:3px;top:265px;width:32px;height:32px"></div>
<svg class="abs" style="left:0;top:89px" width="38" height="220" viewBox="0 89 38 220"><circle cx="9.9" cy="102.1" r="1.25" fill="#1a1a1a"/><circle cx="9.9" cy="108.1" r="1.25" fill="#1a1a1a"/><circle cx="9.9" cy="114.1" r="1.25" fill="#1a1a1a"/><circle cx="9.9" cy="120" r="1.25" fill="#1a1a1a"/><circle cx="16" cy="102.1" r="1.25" fill="#1a1a1a"/><circle cx="16" cy="108.1" r="1.25" fill="#1a1a1a"/><circle cx="16" cy="114.1" r="1.25" fill="#1a1a1a"/><circle cx="16" cy="120" r="1.25" fill="#1a1a1a"/><circle cx="22" cy="102.1" r="1.25" fill="#1a1a1a"/><circle cx="22" cy="108.1" r="1.25" fill="#1a1a1a"/><circle cx="22" cy="114.1" r="1.25" fill="#1a1a1a"/><circle cx="22" cy="120" r="1.25" fill="#1a1a1a"/><circle cx="28" cy="102.1" r="1.25" fill="#1a1a1a"/><circle cx="28" cy="108.1" r="1.25" fill="#1a1a1a"/><circle cx="28" cy="114.1" r="1.25" fill="#1a1a1a"/><circle cx="28" cy="120" r="1.25" fill="#1a1a1a"/><text x="19" y="145.6" text-anchor="middle" font-family="Liberation Sans" font-weight="bold" font-size="14.5" fill="#1c1c1c">In</text><path d="M9 151.5 H29" stroke="#2a2a2a" stroke-width="1.2"/><path d="M7 151.5 L13 149.1 V153.9 Z M31 151.5 L25 149.1 V153.9 Z" fill="#2a2a2a"/><text x="19" y="179" text-anchor="middle" font-family="Liberation Sans" font-weight="bold" font-size="14.5" fill="#1c1c1c" textLength="25" lengthAdjust="spacingAndGlyphs">mm</text><path d="M9 185.5 H29" stroke="#2a2a2a" stroke-width="1.2"/><path d="M7 185.5 L13 183.1 V187.9 Z M31 185.5 L25 183.1 V187.9 Z" fill="#2a2a2a"/><path d="M7 208.8 H31 M15 201 V225" stroke="#9a9a9a" stroke-width="1.6"/><path d="M10.4 208.8 H19.8 M15 204.2 V213.6" stroke="#333" stroke-width="2.2"/><path d="M18.4 211.4 V223.6 L21.2 221 L23.4 225.6 L25.4 224.6 L23.2 220.2 L27 220 Z" fill="#fbfbfb" stroke="#888" stroke-width="0.9"/><path d="M21.9 237 V257" stroke="#a5a5a5" stroke-width="1.6"/><circle cx="21.9" cy="236" r="1.6" fill="#eee" stroke="#a5a5a5" stroke-width="0.9"/><circle cx="21.9" cy="258" r="1.6" fill="#eee" stroke="#a5a5a5" stroke-width="0.9"/><path d="M10.6 236.4 V257.8 L26.6 247 Z" fill="#fbfbfb" stroke="#a01818" stroke-width="1.7"/><path d="M6 243 H10.6 M6 251 H10.6 M26.6 247 H31.6" stroke="#a01818" stroke-width="1.8"/><path d="M13 244.4 H17.6 M13 249.8 H17.6 M15.3 247.6 V252" stroke="#a01818" stroke-width="1.1"/><path d="M13.4 269.5 V292.5 M7 287.5 H30.6" stroke="#1a1a1a" stroke-width="1.3"/><path d="M13.4 279.6 H20.6 V287.5" fill="none" stroke="#1a1a1a" stroke-width="1.2"/></svg>
<div class="sel" style="left:1645px;top:95px;width:32px;height:32px"></div>
<svg class="abs" style="left:1643px;top:89px" width="37" height="700" viewBox="1643 89 37 700"><path d="M1654.6 102 V117.6 L1658 114.4 L1660.8 120.4 L1663.4 119.2 L1660.6 113.4 L1665.6 113.2 Z" fill="#f6f6f6" stroke="#8a8a8a" stroke-width="1"/><path d="M1651.4 138 V154.5 H1655 M1651.4 146 H1655" fill="none" stroke="#666" stroke-width="0.9"/><rect x="1649.6" y="133.6" width="22.8" height="5" rx="0.8" fill="#fafafa" stroke="#a5a5a5" stroke-width="0.9"/><rect x="1655" y="143.6" width="17.4" height="4.6" rx="0.8" fill="#fafafa" stroke="#a5a5a5" stroke-width="0.9"/><rect x="1655" y="152.6" width="17.4" height="4.6" rx="0.8" fill="#fafafa" stroke="#a5a5a5" stroke-width="0.9"/><path d="M1655.2 136.6 V149.4 L1658 146.8 L1660.2 151.6 L1662.4 150.6 L1660.2 146 L1664.2 145.8 Z" fill="#ececec" stroke="#7a7a7a" stroke-width="0.9"/><path d="M1652.8 168.4 V190.2 L1669 179 Z" fill="#fbfbfb" stroke="#a01818" stroke-width="1.5"/><path d="M1648.4 175 H1652.8 M1648.4 183 H1652.8 M1669 179 H1673.6" stroke="#a01818" stroke-width="1.5"/><path d="M1655.6 176.4 H1660 M1655.6 181.6 H1660 M1657.8 179.4 V183.8" stroke="#a01818" stroke-width="1"/><path d="M1660.8 203 V214" stroke="#8a0f0f" stroke-width="1.4"/><path d="M1652 214 H1669.8" stroke="#8a0f0f" stroke-width="2"/><path d="M1655.4 218.4 H1666.4" stroke="#8a0f0f" stroke-width="1.8"/><path d="M1659 222.2 H1663" stroke="#8a0f0f" stroke-width="1.8"/><path d="M1649.8 258.2 L1672.2 235.6" stroke="#0a8a0a" stroke-width="1.9" stroke-linecap="round"/><path d="M1650.4 291.6 L1671.6 270.6" stroke="#0000d2" stroke-width="3.6" stroke-linecap="round"/><path d="M1649.2 305.2 H1660 M1649.2 313.4 H1660" stroke="#9b9b9b" stroke-width="2.4"/><path d="M1670.8 302.2 V327.6" stroke="#9b9b9b" stroke-width="3.4"/><path d="M1660 305 L1671 313 M1660 313.2 L1671 321.2" stroke="#0a8a0a" stroke-width="1.9" stroke-linecap="round"/><path d="M1649.2 339.4 H1660 M1649.2 349 H1660" stroke="#9b9b9b" stroke-width="3"/><path d="M1670.8 336.4 V361.6" stroke="#9b9b9b" stroke-width="3.4"/><path d="M1660.6 339.6 L1670.6 346.6 M1660.6 349.2 L1670.6 355.8" stroke="#0000d2" stroke-width="4" stroke-linecap="round"/><path d="M1653.4 375.2 L1668.2 390.6 M1668.2 375.2 L1653.4 390.6" stroke="#0000e0" stroke-width="1.7"/><path d="M1649.2 416.7 H1664.5 M1664.5 405.2 V428.6" stroke="#9b9b9b" stroke-width="2.6"/><circle cx="1664.5" cy="416.7" r="4.6" fill="#0a860a"/><text x="1654.2" y="454.6" font-family="Liberation Sans" font-size="18.5" fill="#111">A</text><path d="M1650 459.4 H1672" stroke="#0a8a0a" stroke-width="2.6" stroke-linecap="round"/><path d="M1649.4 477.6 H1663.4 L1668.2 485.4 L1663.4 493 H1649.4 Z" fill="#fdfdfd" stroke="#9c1414" stroke-width="1.5"/><path d="M1668.2 485.4 H1673" stroke="#0a8a0a" stroke-width="1.8"/><text x="1652.8" y="491" font-family="Liberation Sans" font-size="12.5" fill="#111">A</text><path d="M1648.8 506.8 H1673.2 V526.2 L1668.2 531.2 H1648.8 Z" fill="#f3f3f2" stroke="#b9b9b7" stroke-width="0.9"/><path d="M1673.2 526.2 L1668.2 526.2 V531.2 Z" fill="#fff" stroke="#b9b9b7" stroke-width="0.6"/><text x="1649.6" y="524" font-family="Liberation Sans" font-size="12.5" fill="#111">A</text><path d="M1660 513.6 H1665.64 L1669.4 518.6 L1665.64 523.6 H1660 Z" fill="none" stroke="#b8860b" stroke-width="1.4"/><path d="M1669.4 518.6 H1672.6" stroke="#0a8a0a" stroke-width="1.6"/><path d="M1648.8 540.6 H1667.8 V556.6 L1664.8 559.6 H1648.8 Z" fill="#f3f3f2" stroke="#b9b9b7" stroke-width="0.9"/><path d="M1667.8 556.6 L1664.8 556.6 V559.6 Z" fill="#fff" stroke="#b9b9b7" stroke-width="0.6"/><path d="M1651.6 543.2 H1670.6 V559.2 L1667.6 562.2 H1651.6 Z" fill="#f3f3f2" stroke="#b9b9b7" stroke-width="0.9"/><path d="M1670.6 559.2 L1667.6 559.2 V562.2 Z" fill="#fff" stroke="#b9b9b7" stroke-width="0.6"/><path d="M1654.6 545.8 H1673.6 V561.4 L1669.6 565.4 H1654.6 Z" fill="#f3f3f2" stroke="#b9b9b7" stroke-width="0.9"/><path d="M1673.6 561.4 L1669.6 561.4 V565.4 Z" fill="#fff" stroke="#b9b9b7" stroke-width="0.6"/><path d="M1660 551 H1662.6 M1668 548.4 H1670.4 M1657.8 557.4 H1660.4 M1666.6 558.6 H1669" stroke="#4a78b8" stroke-width="1.2"/><path d="M1663 552.4 Q1665 546 1667.6 551 M1661 557.4 L1664.4 559.6 L1666 562" fill="none" stroke="#3aa83a" stroke-width="1.1"/><path d="M1653.8 545.4 V552 M1652.4 547.6 H1655.2" stroke="#c03a3a" stroke-width="0.8"/><path d="M1648.8 574.8 H1667.8 V590.8 L1664.8 593.8 H1648.8 Z" fill="#f3f3f2" stroke="#b9b9b7" stroke-width="0.9"/><path d="M1667.8 590.8 L1664.8 590.8 V593.8 Z" fill="#fff" stroke="#b9b9b7" stroke-width="0.6"/><path d="M1651.6 577 H1670.6 V593 L1667.6 596 H1651.6 Z" fill="#f3f3f2" stroke="#b9b9b7" stroke-width="0.9"/><path d="M1670.6 593 L1667.6 593 V596 Z" fill="#fff" stroke="#b9b9b7" stroke-width="0.6"/><path d="M1654.8 579.4 H1673.8 V595.8 L1669.8 599.8 H1654.8 Z" fill="#f3f3f2" stroke="#b9b9b7" stroke-width="0.9"/><path d="M1673.8 595.8 L1669.8 595.8 V599.8 Z" fill="#fff" stroke="#b9b9b7" stroke-width="0.6"/><text x="1656" y="586.8" font-family="Liberation Sans" font-size="9.5" fill="#111">A</text><path d="M1663.2 578.8 H1667.4 L1670.2 582.8 L1667.4 586.8 H1663.2 Z" fill="none" stroke="#b8860b" stroke-width="1.4"/><path d="M1670.2 582.8 H1673.2" stroke="#0a8a0a" stroke-width="1.2"/><path d="M1648.2 589.6 H1654.4 V586.4 L1663.6 593 L1654.4 599.8 V596.6 H1648.2 Z" fill="#4c9c1c" stroke="#3a8010" stroke-width="0.6"/><path d="M1648.8 608.8 H1673.2 V628.2 L1668.2 633.2 H1648.8 Z" fill="#f3f3f2" stroke="#b9b9b7" stroke-width="0.9"/><path d="M1673.2 628.2 L1668.2 628.2 V633.2 Z" fill="#fff" stroke="#b9b9b7" stroke-width="0.6"/><path d="M1649.4 615.6 H1655.16 L1659 620.9 L1655.16 626.2 H1649.4 Z" fill="none" stroke="#b8860b" stroke-width="1.4"/><text x="1660.6" y="626.6" font-family="Liberation Sans" font-size="12.5" fill="#111">A</text><path d="M1649.8 665.4 L1672.2 643.6" stroke="#0000e0" stroke-width="2.6" stroke-dasharray="4.4 2.2"/><text x="1660.9" y="698.8" text-anchor="middle" font-family="Liberation Serif" font-size="30" fill="#1a1a1a" stroke="#1a1a1a" stroke-width="0.4" textLength="19" lengthAdjust="spacingAndGlyphs">T</text><rect x="1648.6" y="715" width="25" height="17.2" rx="1" fill="#b9b6e2" stroke="#8f8cc4" stroke-width="0.8"/><rect x="1649.4" y="716" width="5" height="15.4" fill="#d6d4ee"/><path d="M1652 715 V713.8 H1656 V715" fill="#5a57a0"/><rect x="1666" y="716.4" width="6.4" height="2.4" fill="#9cc4ee"/><circle cx="1664" cy="724" r="8" fill="#f1f1f1" stroke="#d0d0d0" stroke-width="0.8"/><circle cx="1664" cy="724" r="4.6" fill="#d8d8d8" stroke="#aaa" stroke-width="0.6"/><circle cx="1664" cy="724" r="2.4" fill="#151515"/><circle cx="1660.6" cy="716.8" r="1" fill="#2a68c8"/><rect x="1662.6" y="716.2" width="2" height="1.4" fill="#222"/><ellipse cx="1661" cy="765.6" rx="9" ry="2" fill="#a9a7a2" opacity="0.7"/><path d="M1653.2 752 L1654.6 765 Q1661 768 1667.4 765 L1668.8 752 Z" fill="#b9b9b9" stroke="#8a8a8a" stroke-width="0.8"/><path d="M1656.6 753.4 V764.6 M1659.6 753.8 V765.2 M1662.6 753.8 V765.2 M1665.6 753.4 V764.6" stroke="#8e8e8e" stroke-width="1"/><ellipse cx="1661" cy="751" rx="8.8" ry="3.2" fill="#d0d0d0" stroke="#888" stroke-width="0.8"/><path d="M1658.6 748.2 Q1661 745.4 1663.4 748.2" fill="none" stroke="#9a9a9a" stroke-width="1.2"/></svg>
<div class="abs" style="left:0;top:965px;width:1680px;height:59px;background:#dcdad5"></div>
<div class="abs" style="left:0;top:966px;width:1679px;height:36px;border:1px solid #a3a19c"></div>
<div class="abs st" style="left:5px;top:1005px;font-size:14.5px;line-height:17px;color:#000;white-space:nowrap;letter-spacing:0.57px">Done Loading &lt;/home/sparkles/E1201/E1201.sch&gt;</div>
<div class="abs st" style="left:766px;top:1005px;font-size:14.5px;line-height:17px;color:#000;white-space:nowrap;letter-spacing:0.54px">Z 1.83</div>
<div class="abs st" style="left:843px;top:1005px;font-size:14.5px;line-height:17px;color:#000;white-space:nowrap;letter-spacing:0.51px">X 196.85&nbsp; Y 114.30</div>
<div class="abs st" style="left:1074px;top:1005px;font-size:14.5px;line-height:17px;color:#000;white-space:nowrap;letter-spacing:0.56px">dx 58.40&nbsp; dy 21.60&nbsp; dist 62.27</div>
<div class="abs st" style="left:1437px;top:1005px;font-size:14.5px;line-height:17px;color:#000;white-space:nowrap;letter-spacing:0px"><span style="font-size:15.7px">mm</span></div>
</div></body></html>
